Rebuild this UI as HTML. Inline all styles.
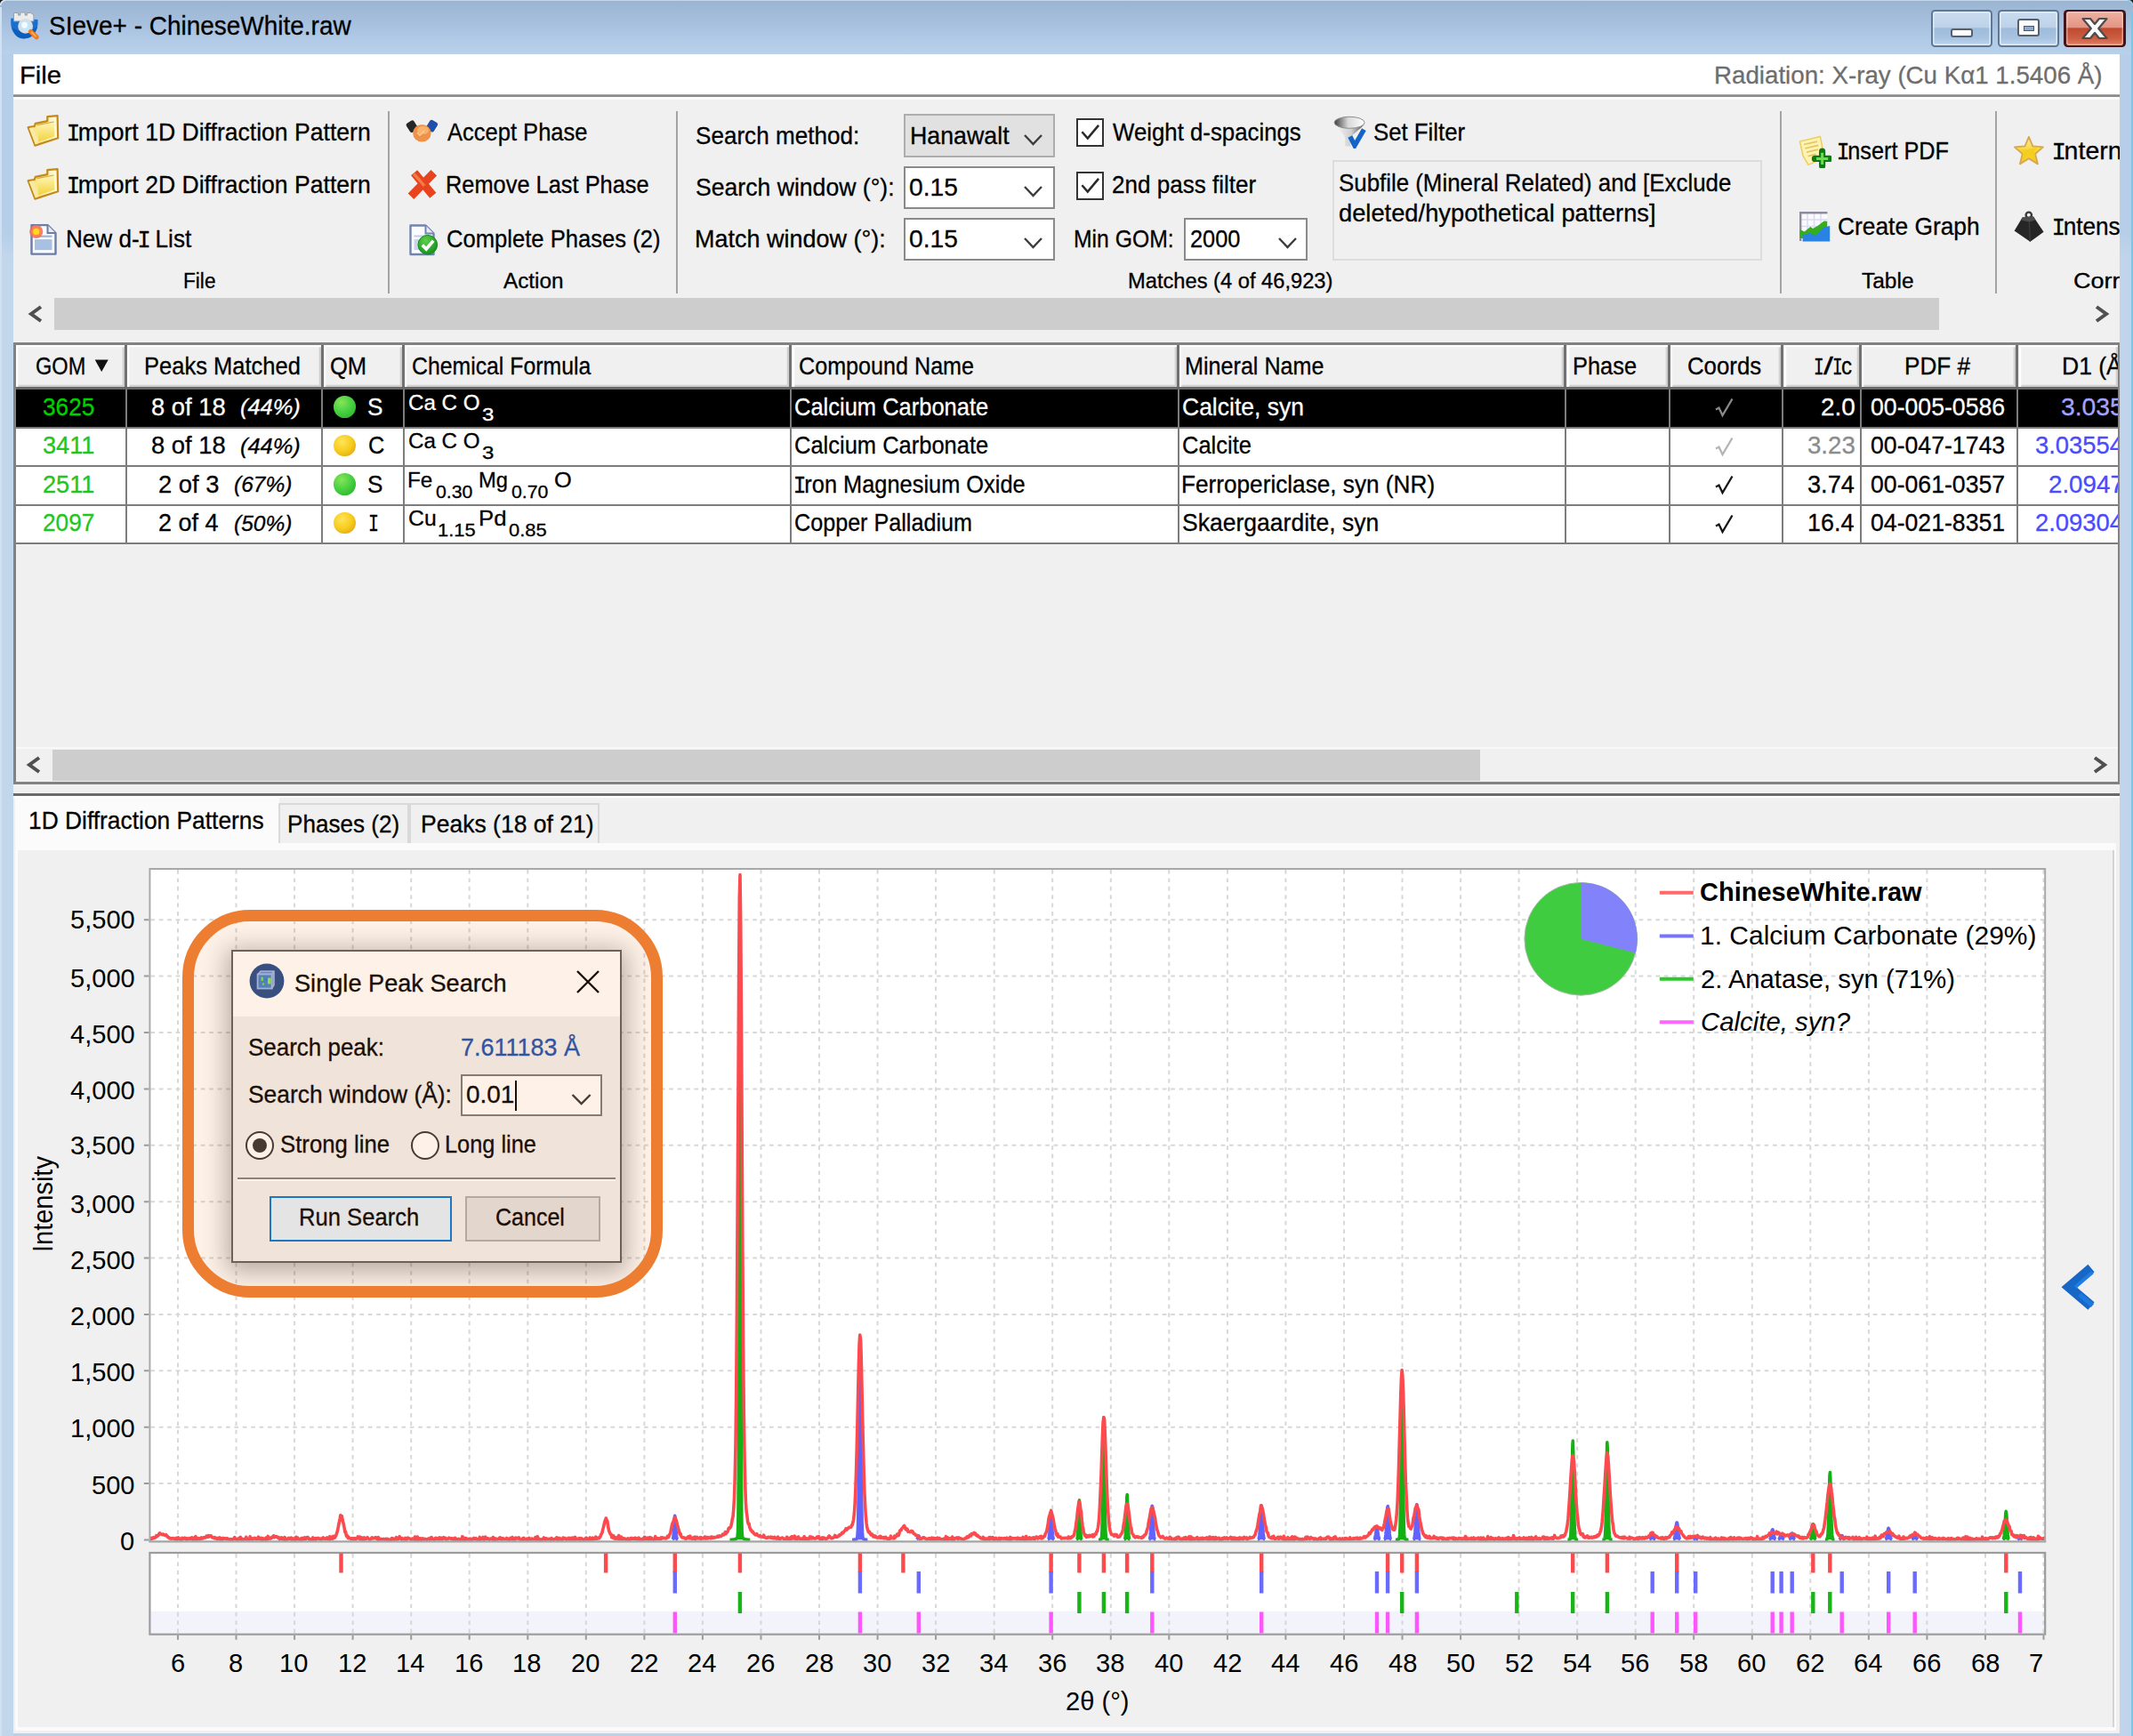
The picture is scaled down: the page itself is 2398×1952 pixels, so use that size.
<!DOCTYPE html>
<html><head><meta charset="utf-8"><title>SIeve+</title>
<style>
html,body{margin:0;padding:0;}
body{width:2398px;height:1952px;position:relative;overflow:hidden;background:#b9d1ea;font-family:"Liberation Sans",sans-serif;}
.a{position:absolute;}
.t{position:absolute;white-space:pre;transform-origin:0 0;-webkit-text-stroke:0.3px currentColor;}
</style></head><body>
<div class="a" style="left:0;top:0;width:2398px;height:1952px;background:#b9d1ea;"></div>
<div class="a" style="left:0;top:0;width:2398px;height:61px;background:linear-gradient(#99b4d2 0%,#a2bcd9 30%,#b0c9e5 70%,#b9d1ea 100%);"></div>
<div class="a" style="left:0;top:61px;width:15px;height:1891px;background:linear-gradient(#b6cee8 0,#b6cee8 200px,#c3d7ec 230px,#c3d7ec 100%);"></div>
<div class="a" style="left:2383px;top:61px;width:15px;height:1891px;background:linear-gradient(#b6cee8 0,#b6cee8 200px,#c0d5eb 230px,#c0d5eb 100%);"></div>
<div class="a" style="left:2396px;top:14px;width:2px;height:1952px;background:#7fc4e6;"></div>
<div class="a" style="left:0px;top:8px;width:1.5px;height:1952px;background:#d2e1f1;"></div>
<div class="a" style="left:6px;top:0;width:2386px;height:1.2px;background:#c4d6e9;"></div>
<svg class="a" style="left:0;top:0" width="10" height="10"><path d="M0 0H5A5 5 0 0 0 0 5Z" fill="#1a1a1a"/><path d="M0.6 6A5.4 5.4 0 0 1 6 0.6" stroke="#e6eef8" stroke-width="1.3" fill="none"/></svg>
<svg class="a" style="left:2388px;top:0" width="10" height="10"><path d="M10 0H5A5 5 0 0 1 10 5Z" fill="#1a1a1a"/><path d="M9.4 6A5.4 5.4 0 0 0 4 0.6" stroke="#8fd0ee" stroke-width="1.3" fill="none"/></svg>
<div class="a " style="left:15.0px;top:61.0px;width:2368.0px;height:1888.0px;background:#f0f0f0;"></div>
<svg class="a" style="left:11px;top:11px" width="35" height="35" viewBox="0 0 35 35">
<path d="M1.5 9.5C0 20 4 31.5 15 32.5C26 33 32.5 24 31.5 11Z" fill="#176fd2"/><path d="M3 20C5 29 10 32 16 32.3C24 32 29 27 31 19Q17 30 3 20Z" fill="#0e5cbc"/>
<path d="M4.5 3.5h5v2.6h2.4V3h5.2v3.1h2.4V3.5h4l3.4 2.2v7.2H4.5z" fill="#ececec" stroke="#9aa0a8" stroke-width="1"/>
<circle cx="17.6" cy="18.4" r="7" fill="#bfe6fb" stroke="#d9dde2" stroke-width="2.8"/><circle cx="16.6" cy="17.2" r="3.4" fill="#f2fbff"/>
<path d="M23.6 24.6l6.4 6" stroke="#f07c22" stroke-width="5.4" stroke-linecap="round"/><path d="M24.6 25.4l4.4 4.2" stroke="#fbb45a" stroke-width="1.6" stroke-linecap="round"/>
</svg>
<div class="a" style="left:2170.8px;top:10.5px;width:69.6px;height:42.5px;border-radius:4.5px;background:#5d7896;"></div>
<div class="a" style="left:2173.3px;top:13.0px;width:64.6px;height:37.5px;border-radius:3px;background:linear-gradient(#cadbee 0,#bdd2ea 46%,#9fbbdb 50%,#a9c4e2 80%,#c0d6ee 100%);box-shadow:inset 0 0 0 1.5px rgba(235,243,252,.8);"></div>
<div class="a" style="left:2193.1000000000004px;top:32.25px;width:25px;height:10px;border-radius:3px;background:#fff;border:2px solid #54606e;box-sizing:border-box;"></div>
<div class="a" style="left:2245.8px;top:10.5px;width:69.6px;height:42.5px;border-radius:4.5px;background:#5d7896;"></div>
<div class="a" style="left:2248.3px;top:13.0px;width:64.6px;height:37.5px;border-radius:3px;background:linear-gradient(#cadbee 0,#bdd2ea 46%,#9fbbdb 50%,#a9c4e2 80%,#c0d6ee 100%);box-shadow:inset 0 0 0 1.5px rgba(235,243,252,.8);"></div>
<div class="a" style="left:2268.1000000000004px;top:21.25px;width:25px;height:20px;border-radius:3px;background:#fff;border:2px solid #54606e;box-sizing:border-box;"></div>
<div class="a" style="left:2274.6000000000004px;top:28.75px;width:12px;height:6.5px;background:#8fa9cb;border:1.8px solid #4c5868;box-sizing:border-box;"></div>
<div class="a" style="left:2320.2px;top:10.5px;width:69.6px;height:42.5px;border-radius:4.5px;background:#43141a;"></div>
<div class="a" style="left:2322.7px;top:13.0px;width:64.6px;height:37.5px;border-radius:3px;background:linear-gradient(#eeb0a2 0,#e49584 46%,#bf4a2f 50%,#cd5f43 80%,#dd8468 100%);box-shadow:inset 0 0 0 1.5px rgba(255,215,200,.55);"></div>
<svg class="a" style="left:2339.0px;top:18.75px" width="32" height="26" viewBox="0 0 32 26"><path d="M2.5 2h8.5l5 6 5-6h8.5l-9.3 11 9.3 11h-8.5l-5-6-5 6h-8.5l9.3-11z" fill="#fafafa" stroke="#4c4c4c" stroke-width="2.2" stroke-linejoin="round"/></svg>
<div class="a " style="left:15.0px;top:61.0px;width:2368.0px;height:46.0px;background:#fff;"></div>
<div class="a " style="left:15.0px;top:106.4px;width:2368.0px;height:3.0px;background:#a6a6a6;"></div>
<div class="a " style="left:15.0px;top:107.1px;width:2368.0px;height:1.7px;background:#8b8b8b;"></div>
<div class="a " style="left:15.0px;top:109.4px;width:2368.0px;height:2.8px;background:#fbfbfb;"></div>
<div class="a " style="left:436.0px;top:124.5px;width:2.0px;height:205.0px;background:#a3a3a3;"></div>
<div class="a " style="left:760.4px;top:124.5px;width:2.0px;height:205.0px;background:#a3a3a3;"></div>
<div class="a " style="left:2001.3px;top:124.5px;width:2.0px;height:205.0px;background:#a3a3a3;"></div>
<div class="a " style="left:2243.0px;top:124.5px;width:2.0px;height:205.0px;background:#a3a3a3;"></div>
<div class="a" style="left:1016px;top:128px;width:169.6px;height:48.5px;background:#e1e1e1;border:2px solid #adadad;box-sizing:border-box;"></div>
<svg class="a" style="left:1150.0px;top:149.5px" width="23" height="14"><path d="M2 2L11.5 12L21 2" fill="none" stroke="#3c3c3c" stroke-width="2.4"/></svg>
<div class="a" style="left:1016px;top:186.6px;width:169.6px;height:48px;background:#fff;border:2px solid #8a8a8a;box-sizing:border-box;"></div>
<svg class="a" style="left:1150.0px;top:207.5px" width="23" height="14"><path d="M2 2L11.5 12L21 2" fill="none" stroke="#3c3c3c" stroke-width="2.4"/></svg>
<div class="a" style="left:1016px;top:245px;width:169.6px;height:48px;background:#fff;border:2px solid #8a8a8a;box-sizing:border-box;"></div>
<svg class="a" style="left:1150.0px;top:266.0px" width="23" height="14"><path d="M2 2L11.5 12L21 2" fill="none" stroke="#3c3c3c" stroke-width="2.4"/></svg>
<div class="a" style="left:1331px;top:245px;width:139px;height:48px;background:#fff;border:2px solid #8a8a8a;box-sizing:border-box;"></div>
<svg class="a" style="left:1435.5px;top:266.0px" width="23" height="14"><path d="M2 2L11.5 12L21 2" fill="none" stroke="#3c3c3c" stroke-width="2.4"/></svg>
<div class="a" style="left:1209.6px;top:133.2px;width:31.5px;height:31.5px;background:#fff;border:2.2px solid #333;box-sizing:border-box;"></div>
<svg class="a" style="left:1209.6px;top:133.2px" width="31.5" height="31.5" viewBox="0 0 32 32"><path d="M6.5 15.5L13 23L25.5 8" fill="none" stroke="#2a2a2a" stroke-width="2.6"/></svg>
<div class="a" style="left:1209.6px;top:193.4px;width:31.5px;height:31.5px;background:#fff;border:2.2px solid #333;box-sizing:border-box;"></div>
<svg class="a" style="left:1209.6px;top:193.4px" width="31.5" height="31.5" viewBox="0 0 32 32"><path d="M6.5 15.5L13 23L25.5 8" fill="none" stroke="#2a2a2a" stroke-width="2.6"/></svg>
<div class="a" style="left:1498.3px;top:180px;width:482.4px;height:112.7px;border:2px solid #dcdcdc;box-sizing:border-box;"></div>
<svg width="0" height="0" style="position:absolute"><defs><linearGradient id="gf1" x1="0" y1="0" x2="0" y2="1"><stop offset="0" stop-color="#fff6b8"/><stop offset="1" stop-color="#f3d23c"/></linearGradient><linearGradient id="gf2" x1="0" y1="0" x2="1" y2="0"><stop offset="0" stop-color="#f7df6a"/><stop offset="1" stop-color="#fffbe2"/></linearGradient><linearGradient id="gfun" x1="0" y1="0" x2="1" y2="0"><stop offset="0" stop-color="#3c3c3c"/><stop offset=".45" stop-color="#d8d8d8"/><stop offset="1" stop-color="#ffffff"/></linearGradient><linearGradient id="gcone" x1="0" y1="0" x2="1" y2="0"><stop offset="0" stop-color="#f4f4f4"/><stop offset=".55" stop-color="#d0d0d0"/><stop offset="1" stop-color="#4a4a4a"/></linearGradient><radialGradient id="ggc" cx=".4" cy=".3" r=".8"><stop offset="0" stop-color="#5fd04a"/><stop offset="1" stop-color="#0f8a1a"/></radialGradient><linearGradient id="gstar" x1="0" y1="0" x2="0" y2="1"><stop offset="0" stop-color="#fbeea0"/><stop offset=".5" stop-color="#f7d838"/><stop offset="1" stop-color="#f3c618"/></linearGradient></defs></svg>
<svg class="a" style="left:30.4px;top:129.4px" width="37" height="37" viewBox="-1 -1 37 37">
<path d="M22.3 1.2L33.6 0.2L34.2 25.2L8.4 33.6L0.6 13.2L7.6 12.2L8.8 8.8L22.3 6.2Z" fill="url(#gf2)" stroke="#c48a18" stroke-width="2.2" stroke-linejoin="round"/>
<path d="M1.6 14L7 13.2L11.6 31.6L8.8 32.6Z" fill="#f7e9a8"/>
<path d="M10.6 10.6L29.6 7L30.4 23.6L12.4 29.6Z" fill="url(#gf1)"/>
<path d="M10.6 10.6L29.6 7" stroke="#d8a838" stroke-width="1.2" fill="none"/></svg>
<svg class="a" style="left:30.4px;top:189.4px" width="37" height="37" viewBox="-1 -1 37 37">
<path d="M22.3 1.2L33.6 0.2L34.2 25.2L8.4 33.6L0.6 13.2L7.6 12.2L8.8 8.8L22.3 6.2Z" fill="url(#gf2)" stroke="#c48a18" stroke-width="2.2" stroke-linejoin="round"/>
<path d="M1.6 14L7 13.2L11.6 31.6L8.8 32.6Z" fill="#f7e9a8"/>
<path d="M10.6 10.6L29.6 7L30.4 23.6L12.4 29.6Z" fill="url(#gf1)"/>
<path d="M10.6 10.6L29.6 7" stroke="#d8a838" stroke-width="1.2" fill="none"/></svg>
<svg class="a" style="left:30px;top:249px" width="38" height="40" viewBox="-4 -2.6 38 40">
<path d="M1.5 1.5h18l9 9v23.5h-27z" fill="#fbfcff" stroke="#6b7ca8" stroke-width="2.4" stroke-linejoin="round"/>
<path d="M19.5 1.5v9h9" fill="#e6ebf5" stroke="#6b7ca8" stroke-width="2"/>
<rect x="5" y="17.5" width="19.5" height="12" fill="#a8c0e2"/><rect x="5" y="13" width="19.5" height="2.2" fill="#9db4dc"/>
<circle cx="6.7" cy="8.8" r="7.6" fill="#f26a5e" opacity=".85"/><circle cx="6.7" cy="8.8" r="5.6" fill="#f88a3a"/><circle cx="6.7" cy="8.8" r="3.6" fill="#ffd622"/></svg>
<svg class="a" style="left:456px;top:134px" width="38" height="28" viewBox="0 0 38 28">
<rect x="-5" y="-6" width="10" height="12" rx="2.5" transform="translate(7.2 8.2) rotate(-32)" fill="#262626"/>
<rect x="-5" y="-6" width="10" height="12" rx="2.5" transform="translate(29.6 7.6) rotate(32)" fill="#1f4fa8"/>
<ellipse cx="18.4" cy="15.8" rx="10.2" ry="9.8" fill="#f0914a"/><ellipse cx="19.5" cy="12.5" rx="6.5" ry="4.6" fill="#f8b670" opacity=".9"/>
<path d="M13 15l3 3 5-5" stroke="#f9cf8a" stroke-width="1.6" fill="none"/></svg>
<svg class="a" style="left:456px;top:190px" width="37" height="37" viewBox="0 0 37 37">
<path d="M9.6 4.2L30.8 29.8" stroke="#e8431e" stroke-width="9.2" fill="none"/>
<path d="M31.8 4.2L6 30.8" stroke="#e8431e" stroke-width="9.2" fill="none"/>
<path d="M9 5.4C13 9 17 14 21 19" stroke="#f38a50" stroke-width="3.4" fill="none" opacity=".8"/></svg>
<svg class="a" style="left:458px;top:250px" width="38" height="40" viewBox="-2 -2 38 40">
<path d="M1.5 1.5h17l9 9v23.5h-26z" fill="#fbfcff" stroke="#7283ad" stroke-width="2.4" stroke-linejoin="round"/>
<path d="M18.5 1.5v9h9" fill="#e6ebf5" stroke="#7283ad" stroke-width="2"/>
<rect x="5.5" y="17" width="6" height="12" fill="#c9d4ea"/><rect x="5.5" y="12.5" width="12" height="2" fill="#c0cce6"/>
<circle cx="20.8" cy="23.2" r="10.8" fill="url(#ggc)" stroke="#128a1c" stroke-width="1"/><path d="M14.8 23.4l4.4 4.6 8-9.4" stroke="#fff" stroke-width="3.6" fill="none"/></svg>
<svg class="a" style="left:1499px;top:130px" width="38" height="37" viewBox="-1 -1 38 37">
<path d="M1.2 8.6C6 16 11.5 20.5 12.2 24.5V33.4H18.4V24.5C20 20 30 14 34 8.6Z" fill="url(#gcone)"/>
<ellipse cx="17.1" cy="6.8" rx="17" ry="6.5" fill="url(#gfun)" stroke="#8e8e8e" stroke-width="1"/>
<path d="M17.8 22.4L23 32.6L33.4 14.6" stroke="#1565c8" stroke-width="5.4" fill="none" stroke-linejoin="miter"/></svg>
<svg class="a" style="left:2021.5px;top:152px" width="37" height="37" viewBox="-1 -1 37 37">
<path d="M0.5 6L23.4 0.6L28 24L10 32.4L4 22Z" fill="#fdf4b4" stroke="#ecd060" stroke-width="1.6" stroke-linejoin="round"/>
<path d="M5 9.5l15-3.4M6.4 13.8l15-3.4M8 18.2l13-3M9.6 22.6l9-2.2" stroke="#e4c662" stroke-width="1.7"/>
<path d="M25.6 17.2v16.4M17.4 25.4h16.4" stroke="#0b7d10" stroke-width="7.2" stroke-linecap="round"/><path d="M25.6 18.8v13.2M19 25.4h13.2" stroke="#6fdc4c" stroke-width="3"/></svg>
<svg class="a" style="left:2021.5px;top:236.7px" width="37" height="37" viewBox="-1 -1 37 37">
<rect x="1.4" y="1.4" width="29.6" height="31" fill="#fafaff"/>
<path d="M1.4 9h30M1.4 16.5h30M9 1.4v31M16.5 1.4v31M24 1.4v31" stroke="#dcdcf0" stroke-width="1.6"/>
<path d="M1.2 33V1.2H31.4" stroke="#8c8c9c" stroke-width="2.4" fill="none"/>
<path d="M0.6 20l5 2.6 6.6-5.6 3 2 6-3.6 6.4-5 3.6 0.4V30H0.6z" fill="#34ae1e"/>
<path d="M3.6 26.4l8-2.4 7 3 8.6-9.4 7-1.6V33.6H3.6z" fill="#2a82e2"/></svg>
<svg class="a" style="left:2263.3px;top:151.5px" width="37" height="37" viewBox="-1 -1 37 37">
<path d="M16.9 0.8l4.4 10.6 11.6 1-8.8 7.6 2.8 11.4-10-6.2-10 6.2 2.8-11.4-8.8-7.6 11.6-1z" fill="url(#gstar)" stroke="#d6a652" stroke-width="1.8" stroke-linejoin="round"/>
<path d="M6 15.5C14 15.5 22 14 28 11.5l-5 6 1.6 8-7.7-4.6-7.7 4.6 1.6-8z" fill="#f5cc1c" opacity=".85"/></svg>
<svg class="a" style="left:2263.3px;top:236.7px" width="37" height="37" viewBox="-1 -1 37 37">
<circle cx="16.8" cy="3.8" r="3.2" fill="none" stroke="#3a3a3a" stroke-width="2.4"/>
<path d="M9.6 6.4L22 5.6L33.6 22.8L18.4 33.8L0.6 21.6Z" fill="#262626"/>
<path d="M9.6 6.4L22 5.6L24.6 9.4L17.4 11.4L8.2 9.6Z" fill="#4c4c4c"/><path d="M17.4 11.4L18.4 33.8" stroke="#3e3e3e" stroke-width="1.2"/></svg>
<div class="a " style="left:60.5px;top:335.0px;width:2119.0px;height:35.5px;background:#cdcdcd;"></div>
<svg class="a" style="left:29px;top:341.75px" width="22" height="22"><path d="M17 3L6 11L17 19" fill="none" stroke="#505050" stroke-width="4"/></svg>
<svg class="a" style="left:2352px;top:341.75px" width="22" height="22"><path d="M5 3L16 11L5 19" fill="none" stroke="#505050" stroke-width="4"/></svg>
<div class="a " style="left:15.0px;top:385.0px;width:2368.0px;height:497.0px;background:#828282;"></div>
<div class="a " style="left:17.6px;top:387.6px;width:2363.5px;height:491.5px;background:#f0f0f0;"></div>
<div class="a" style="left:17.6px;top:387.6px;width:122.6px;height:47.599999999999966px;background:#f0f0f0;box-shadow:inset 2.3px 2.3px 0 #fff, inset -2.3px -2.3px 0 #cfcfcf;"></div>
<div class="a" style="left:143.3px;top:387.6px;width:217.3px;height:47.599999999999966px;background:#f0f0f0;box-shadow:inset 2.3px 2.3px 0 #fff, inset -2.3px -2.3px 0 #cfcfcf;"></div>
<div class="a " style="left:140.2px;top:387.6px;width:3.1px;height:47.6px;background:#717171;"></div>
<div class="a" style="left:363.7px;top:387.6px;width:88.5px;height:47.599999999999966px;background:#f0f0f0;box-shadow:inset 2.3px 2.3px 0 #fff, inset -2.3px -2.3px 0 #cfcfcf;"></div>
<div class="a " style="left:360.6px;top:387.6px;width:3.1px;height:47.6px;background:#717171;"></div>
<div class="a" style="left:455.3px;top:387.6px;width:432.1px;height:47.599999999999966px;background:#f0f0f0;box-shadow:inset 2.3px 2.3px 0 #fff, inset -2.3px -2.3px 0 #cfcfcf;"></div>
<div class="a " style="left:452.2px;top:387.6px;width:3.1px;height:47.6px;background:#717171;"></div>
<div class="a" style="left:890.5px;top:387.6px;width:432.6px;height:47.599999999999966px;background:#f0f0f0;box-shadow:inset 2.3px 2.3px 0 #fff, inset -2.3px -2.3px 0 #cfcfcf;"></div>
<div class="a " style="left:887.4px;top:387.6px;width:3.1px;height:47.6px;background:#717171;"></div>
<div class="a" style="left:1326.2px;top:387.6px;width:432.2px;height:47.599999999999966px;background:#f0f0f0;box-shadow:inset 2.3px 2.3px 0 #fff, inset -2.3px -2.3px 0 #cfcfcf;"></div>
<div class="a " style="left:1323.1px;top:387.6px;width:3.1px;height:47.6px;background:#717171;"></div>
<div class="a" style="left:1761.5px;top:387.6px;width:113.6px;height:47.599999999999966px;background:#f0f0f0;box-shadow:inset 2.3px 2.3px 0 #fff, inset -2.3px -2.3px 0 #cfcfcf;"></div>
<div class="a " style="left:1758.4px;top:387.6px;width:3.1px;height:47.6px;background:#717171;"></div>
<div class="a" style="left:1878.2px;top:387.6px;width:124.2px;height:47.599999999999966px;background:#f0f0f0;box-shadow:inset 2.3px 2.3px 0 #fff, inset -2.3px -2.3px 0 #cfcfcf;"></div>
<div class="a " style="left:1875.1px;top:387.6px;width:3.1px;height:47.6px;background:#717171;"></div>
<div class="a" style="left:2005.5px;top:387.6px;width:84.6px;height:47.599999999999966px;background:#f0f0f0;box-shadow:inset 2.3px 2.3px 0 #fff, inset -2.3px -2.3px 0 #cfcfcf;"></div>
<div class="a " style="left:2002.4px;top:387.6px;width:3.1px;height:47.6px;background:#717171;"></div>
<div class="a" style="left:2093.2px;top:387.6px;width:173.2px;height:47.599999999999966px;background:#f0f0f0;box-shadow:inset 2.3px 2.3px 0 #fff, inset -2.3px -2.3px 0 #cfcfcf;"></div>
<div class="a " style="left:2090.1px;top:387.6px;width:3.1px;height:47.6px;background:#717171;"></div>
<div class="a" style="left:2269.5px;top:387.6px;width:111.7px;height:47.599999999999966px;background:#f0f0f0;box-shadow:inset 2.3px 2.3px 0 #fff, inset -2.3px -2.3px 0 #cfcfcf;"></div>
<div class="a " style="left:2266.4px;top:387.6px;width:3.1px;height:47.6px;background:#717171;"></div>
<div class="a " style="left:17.6px;top:435.2px;width:2363.5px;height:2.8px;background:#6a6a6a;"></div>
<svg class="a" style="left:105.8px;top:403.6px" width="17" height="15"><path d="M0.7 0.5h15l-7.5 13.6z" fill="#111"/></svg>
<div class="a " style="left:17.6px;top:438.0px;width:2363.5px;height:41.5px;background:#000;"></div>
<div class="a " style="left:17.6px;top:479.5px;width:2363.5px;height:2.0px;background:#7c7c7c;"></div>
<div class="a" style="left:375.0px;top:445.3px;width:24.6px;height:24.6px;border-radius:50%;background:radial-gradient(circle at 36% 30%,#86e458 0,#44cf40 50%,#2fb42f 85%,#27a027 100%);"></div>
<svg class="a" style="left:1926px;top:446.0px" width="26" height="26"><path d="M3 14.5L6.5 12.5L10.5 21L21.5 2.5" fill="none" stroke="#8a8a8a" stroke-width="2.3"/></svg>
<div class="a " style="left:17.6px;top:481.5px;width:2363.5px;height:41.5px;background:#fff;"></div>
<div class="a " style="left:17.6px;top:523.0px;width:2363.5px;height:2.0px;background:#7c7c7c;"></div>
<div class="a" style="left:375.0px;top:488.8px;width:24.6px;height:24.6px;border-radius:50%;background:radial-gradient(circle at 38% 32%,#ffe45a 0,#f6cc1c 50%,#e2a616 85%,#c88a12 100%);"></div>
<svg class="a" style="left:1926px;top:489.5px" width="26" height="26"><path d="M3 14.5L6.5 12.5L10.5 21L21.5 2.5" fill="none" stroke="#b4b4b4" stroke-width="2.3"/></svg>
<div class="a " style="left:17.6px;top:525.0px;width:2363.5px;height:41.5px;background:#fff;"></div>
<div class="a " style="left:17.6px;top:566.5px;width:2363.5px;height:2.0px;background:#7c7c7c;"></div>
<div class="a" style="left:375.0px;top:532.3000000000001px;width:24.6px;height:24.6px;border-radius:50%;background:radial-gradient(circle at 36% 30%,#86e458 0,#44cf40 50%,#2fb42f 85%,#27a027 100%);"></div>
<svg class="a" style="left:1926px;top:533.0px" width="26" height="26"><path d="M3 14.5L6.5 12.5L10.5 21L21.5 2.5" fill="none" stroke="#151515" stroke-width="2.3"/></svg>
<div class="a " style="left:17.6px;top:568.5px;width:2363.5px;height:41.5px;background:#fff;"></div>
<div class="a " style="left:17.6px;top:610.0px;width:2363.5px;height:2.0px;background:#7c7c7c;"></div>
<div class="a" style="left:375.0px;top:575.8000000000001px;width:24.6px;height:24.6px;border-radius:50%;background:radial-gradient(circle at 38% 32%,#ffe45a 0,#f6cc1c 50%,#e2a616 85%,#c88a12 100%);"></div>
<svg class="a" style="left:1926px;top:576.5px" width="26" height="26"><path d="M3 14.5L6.5 12.5L10.5 21L21.5 2.5" fill="none" stroke="#151515" stroke-width="2.3"/></svg>
<div class="a " style="left:140.7px;top:438.0px;width:2.2px;height:174.0px;background:#7c7c7c;"></div>
<div class="a " style="left:361.1px;top:438.0px;width:2.2px;height:174.0px;background:#7c7c7c;"></div>
<div class="a " style="left:452.7px;top:438.0px;width:2.2px;height:174.0px;background:#7c7c7c;"></div>
<div class="a " style="left:887.9px;top:438.0px;width:2.2px;height:174.0px;background:#7c7c7c;"></div>
<div class="a " style="left:1323.6px;top:438.0px;width:2.2px;height:174.0px;background:#7c7c7c;"></div>
<div class="a " style="left:1758.9px;top:438.0px;width:2.2px;height:174.0px;background:#7c7c7c;"></div>
<div class="a " style="left:1875.6px;top:438.0px;width:2.2px;height:174.0px;background:#7c7c7c;"></div>
<div class="a " style="left:2002.9px;top:438.0px;width:2.2px;height:174.0px;background:#7c7c7c;"></div>
<div class="a " style="left:2090.6px;top:438.0px;width:2.2px;height:174.0px;background:#7c7c7c;"></div>
<div class="a " style="left:2266.9px;top:438.0px;width:2.2px;height:174.0px;background:#7c7c7c;"></div>
<div class="a " style="left:17.6px;top:840.0px;width:2363.5px;height:2.0px;background:#f8f8f8;"></div>
<div class="a " style="left:59.0px;top:843.0px;width:1605.2px;height:34.6px;background:#cdcdcd;"></div>
<svg class="a" style="left:26.5px;top:849.3px" width="22" height="22"><path d="M17 3L6 11L17 19" fill="none" stroke="#505050" stroke-width="4"/></svg>
<svg class="a" style="left:2350px;top:849.3px" width="22" height="22"><path d="M5 3L16 11L5 19" fill="none" stroke="#505050" stroke-width="4"/></svg>
<div class="a " style="left:15.0px;top:892.4px;width:2368.0px;height:2.4px;background:#6a6a6a;"></div>
<div class="a " style="left:15.0px;top:894.8px;width:2368.0px;height:2.4px;background:#fdfdfd;"></div>
<div class="a " style="left:16.5px;top:947.5px;width:2362.0px;height:998.6px;background:#fbfbfb;"></div>
<div class="a " style="left:16.5px;top:897.0px;width:297.0px;height:52.0px;background:#fbfbfb;"></div>
<div class="a" style="left:313.4px;top:902.9px;width:146.5px;height:45px;background:#f0f0f0;border:2px solid #d9d9d9;border-bottom:none;box-sizing:border-box;"></div>
<div class="a" style="left:459.9px;top:902.9px;width:214.5px;height:45px;background:#f0f0f0;border:2px solid #d9d9d9;border-bottom:none;box-sizing:border-box;"></div>
<div class="a " style="left:20.0px;top:956.0px;width:2355.0px;height:986.0px;background:#f0f0f0;"></div>
<div class="a " style="left:2375.0px;top:956.0px;width:1.6px;height:986.0px;background:#d4d4d4;"></div>
<svg class="a" style="left:0;top:0" width="2398" height="1952" viewBox="0 0 2398 1952">
<rect x="167.4" y="976" width="2132.7999999999997" height="757.2" fill="#fff"/>
<rect x="167.4" y="1745" width="2132.7999999999997" height="93.70000000000005" fill="#fff"/>
<rect x="169.4" y="1811.7" width="2129.7999999999997" height="25" fill="#f3f3fb"/>
<path d="M200.0 978V1732.2M200.0 1747V1837.7M265.5 978V1732.2M265.5 1747V1837.7M331.1 978V1732.2M331.1 1747V1837.7M396.6 978V1732.2M396.6 1747V1837.7M462.2 978V1732.2M462.2 1747V1837.7M527.7 978V1732.2M527.7 1747V1837.7M593.3 978V1732.2M593.3 1747V1837.7M658.8 978V1732.2M658.8 1747V1837.7M724.4 978V1732.2M724.4 1747V1837.7M789.9 978V1732.2M789.9 1747V1837.7M855.5 978V1732.2M855.5 1747V1837.7M921.0 978V1732.2M921.0 1747V1837.7M986.6 978V1732.2M986.6 1747V1837.7M1052.1 978V1732.2M1052.1 1747V1837.7M1117.7 978V1732.2M1117.7 1747V1837.7M1183.2 978V1732.2M1183.2 1747V1837.7M1248.8 978V1732.2M1248.8 1747V1837.7M1314.3 978V1732.2M1314.3 1747V1837.7M1379.9 978V1732.2M1379.9 1747V1837.7M1445.4 978V1732.2M1445.4 1747V1837.7M1511.0 978V1732.2M1511.0 1747V1837.7M1576.5 978V1732.2M1576.5 1747V1837.7M1642.1 978V1732.2M1642.1 1747V1837.7M1707.6 978V1732.2M1707.6 1747V1837.7M1773.2 978V1732.2M1773.2 1747V1837.7M1838.7 978V1732.2M1838.7 1747V1837.7M1904.2 978V1732.2M1904.2 1747V1837.7M1969.8 978V1732.2M1969.8 1747V1837.7M2035.3 978V1732.2M2035.3 1747V1837.7M2100.9 978V1732.2M2100.9 1747V1837.7M2166.4 978V1732.2M2166.4 1747V1837.7M2232.0 978V1732.2M2232.0 1747V1837.7M2297.5 978V1732.2M2297.5 1747V1837.7M169.4 1668.1H2299.2M169.4 1604.7H2299.2M169.4 1541.3H2299.2M169.4 1477.9H2299.2M169.4 1414.5H2299.2M169.4 1351.2H2299.2M169.4 1287.8H2299.2M169.4 1224.4H2299.2M169.4 1161.0H2299.2M169.4 1097.6H2299.2M169.4 1034.2H2299.2" stroke="#d8d8d8" stroke-width="2" stroke-dasharray="4.7 4.7" fill="none"/>
<path d="M161.9 1731.5H167.4M161.9 1668.1H167.4M161.9 1604.7H167.4M161.9 1541.3H167.4M161.9 1477.9H167.4M161.9 1414.5H167.4M161.9 1351.2H167.4M161.9 1287.8H167.4M161.9 1224.4H167.4M161.9 1161.0H167.4M161.9 1097.6H167.4M161.9 1034.2H167.4M200.0 1838.7V1843.7M265.5 1838.7V1843.7M331.1 1838.7V1843.7M396.6 1838.7V1843.7M462.2 1838.7V1843.7M527.7 1838.7V1843.7M593.3 1838.7V1843.7M658.8 1838.7V1843.7M724.4 1838.7V1843.7M789.9 1838.7V1843.7M855.5 1838.7V1843.7M921.0 1838.7V1843.7M986.6 1838.7V1843.7M1052.1 1838.7V1843.7M1117.7 1838.7V1843.7M1183.2 1838.7V1843.7M1248.8 1838.7V1843.7M1314.3 1838.7V1843.7M1379.9 1838.7V1843.7M1445.4 1838.7V1843.7M1511.0 1838.7V1843.7M1576.5 1838.7V1843.7M1642.1 1838.7V1843.7M1707.6 1838.7V1843.7M1773.2 1838.7V1843.7M1838.7 1838.7V1843.7M1904.2 1838.7V1843.7M1969.8 1838.7V1843.7M2035.3 1838.7V1843.7M2100.9 1838.7V1843.7M2166.4 1838.7V1843.7M2232.0 1838.7V1843.7M2297.5 1838.7V1843.7" stroke="#9a9a9a" stroke-width="2" fill="none"/>
<clipPath id="pc"><rect x="168.4" y="977" width="2130.7999999999997" height="757.2"/></clipPath>
<g clip-path="url(#pc)" fill="none" stroke-linejoin="round">
<path d="M756.0 1731.2L756.4 1730.7L756.8 1729.5L757.2 1726.6L757.6 1721.5L757.9 1714.5L758.3 1707.8L758.7 1704.3L759.1 1706.1L759.5 1712.1L759.9 1719.3L760.3 1725.2L760.7 1728.7L761.1 1730.4L761.5 1731.1L761.9 1731.3M958.1 1731.3L958.5 1731.3L958.9 1731.3L959.3 1731.2L959.7 1731.2L960.1 1731.2L960.5 1731.1L960.9 1731.1L961.3 1731.0L961.7 1731.0L962.1 1730.9L962.5 1730.8L962.8 1730.6L963.2 1730.2L963.6 1729.3L964.0 1726.6L964.4 1720.1L964.8 1705.7L965.2 1679.2L965.6 1638.6L966.0 1588.5L966.4 1541.7L966.8 1515.3L967.2 1520.9L967.6 1555.9L968.0 1605.6L968.4 1653.6L968.7 1689.6L969.1 1711.6L969.5 1722.9L969.9 1727.8L970.3 1729.7L970.7 1730.4L971.1 1730.7L971.5 1730.8L971.9 1730.9L972.3 1731.0L972.7 1731.1L973.1 1731.1L973.5 1731.2L973.9 1731.2L974.3 1731.2L974.6 1731.3L975.0 1731.3L975.4 1731.3M1030.5 1731.1L1030.9 1730.7L1031.3 1730.1L1031.7 1729.1L1032.1 1728.1L1032.5 1727.3L1032.9 1727.1L1033.2 1727.5L1033.6 1728.4L1034.0 1729.4L1034.4 1730.3L1034.8 1730.9L1035.2 1731.2M1178.0 1731.3L1178.4 1731.1L1178.8 1730.7L1179.2 1729.6L1179.5 1727.3L1179.9 1723.2L1180.3 1717.1L1180.7 1709.9L1181.1 1703.6L1181.5 1700.5L1181.9 1702.1L1182.3 1707.6L1182.7 1714.8L1183.1 1721.4L1183.5 1726.2L1183.9 1729.0L1184.3 1730.4L1184.7 1731.0L1185.1 1731.3M1291.6 1731.3L1292.0 1731.1L1292.4 1730.6L1292.8 1729.5L1293.2 1726.9L1293.6 1722.2L1294.0 1715.0L1294.4 1706.1L1294.8 1697.9L1295.2 1693.2L1295.6 1694.2L1296.0 1700.4L1296.4 1709.2L1296.7 1717.7L1297.1 1724.1L1297.5 1728.0L1297.9 1730.0L1298.3 1730.8L1298.7 1731.2L1299.1 1731.3M1413.9 1731.3L1414.3 1731.2L1414.7 1730.9L1415.1 1730.3L1415.5 1729.0L1415.9 1726.4L1416.3 1722.0L1416.7 1715.6L1417.1 1707.8L1417.5 1700.1L1417.9 1694.5L1418.3 1692.9L1418.7 1696.0L1419.1 1702.5L1419.5 1710.5L1419.8 1718.0L1420.2 1723.7L1420.6 1727.4L1421.0 1729.5L1421.4 1730.6L1421.8 1731.0L1422.2 1731.2M1544.5 1731.3L1544.9 1731.1L1545.3 1730.6L1545.7 1729.7L1546.1 1728.2L1546.5 1726.0L1546.9 1723.3L1547.3 1720.7L1547.7 1718.7L1548.1 1718.2L1548.5 1719.2L1548.8 1721.5L1549.2 1724.2L1549.6 1726.8L1550.0 1728.8L1550.4 1730.1L1550.8 1730.8L1551.2 1731.1L1551.6 1731.3M1555.9 1731.3L1556.3 1731.2L1556.7 1730.9L1557.1 1730.2L1557.5 1728.7L1557.9 1725.9L1558.3 1721.2L1558.7 1714.7L1559.1 1706.9L1559.5 1699.4L1559.9 1694.5L1560.3 1693.7L1560.6 1697.4L1561.0 1704.3L1561.4 1712.2L1561.8 1719.2L1562.2 1724.5L1562.6 1727.9L1563.0 1729.8L1563.4 1730.7L1563.8 1731.1L1564.2 1731.3M1588.6 1731.3L1589.0 1731.2L1589.4 1731.0L1589.7 1730.4L1590.1 1729.2L1590.5 1726.8L1590.9 1722.7L1591.3 1716.5L1591.7 1708.7L1592.1 1700.6L1592.5 1694.3L1592.9 1691.9L1593.3 1694.3L1593.7 1700.6L1594.1 1708.7L1594.5 1716.5L1594.9 1722.7L1595.3 1726.8L1595.6 1729.2L1596.0 1730.4L1596.4 1731.0L1596.8 1731.2L1597.2 1731.3M1854.4 1731.2L1854.8 1730.9L1855.2 1730.4L1855.6 1729.5L1856.0 1728.4L1856.4 1727.0L1856.8 1725.5L1857.2 1724.3L1857.6 1723.7L1858.0 1723.8L1858.4 1724.7L1858.8 1726.0L1859.2 1727.4L1859.5 1728.8L1859.9 1729.8L1860.3 1730.6L1860.7 1731.0L1861.1 1731.3M1881.2 1731.3L1881.6 1731.1L1882.0 1730.7L1882.4 1730.0L1882.7 1728.7L1883.1 1726.6L1883.5 1723.7L1883.9 1720.2L1884.3 1716.5L1884.7 1713.5L1885.1 1712.0L1885.5 1712.3L1885.9 1714.4L1886.3 1717.7L1886.7 1721.4L1887.1 1724.7L1887.5 1727.4L1887.9 1729.2L1888.3 1730.3L1888.6 1730.9L1889.0 1731.2M1903.6 1731.2L1904.0 1730.9L1904.4 1730.5L1904.8 1730.1L1905.2 1729.5L1905.6 1729.1L1906.0 1728.8L1906.3 1728.7L1906.7 1728.9L1907.1 1729.4L1907.5 1729.9L1907.9 1730.4L1908.3 1730.8L1908.7 1731.1L1909.1 1731.3M1988.9 1731.3L1989.3 1731.1L1989.7 1730.8L1990.1 1730.1L1990.5 1729.0L1990.9 1727.5L1991.3 1725.5L1991.7 1723.3L1992.1 1721.3L1992.5 1720.1L1992.9 1719.9L1993.3 1720.8L1993.7 1722.6L1994.0 1724.8L1994.4 1726.8L1994.8 1728.6L1995.2 1729.8L1995.6 1730.6L1996.0 1731.0L1996.4 1731.2M1999.2 1731.3L1999.6 1731.1L1999.9 1730.7L2000.3 1730.1L2000.7 1729.2L2001.1 1728.1L2001.5 1726.8L2001.9 1725.7L2002.3 1725.0L2002.7 1724.9L2003.1 1725.5L2003.5 1726.5L2003.9 1727.7L2004.3 1728.9L2004.7 1729.8L2005.1 1730.5L2005.5 1731.0L2005.8 1731.2M2011.4 1731.2L2011.7 1731.0L2012.1 1730.5L2012.5 1729.7L2012.9 1728.7L2013.3 1727.3L2013.7 1725.9L2014.1 1724.7L2014.5 1724.0L2014.9 1724.0L2015.3 1724.7L2015.7 1725.9L2016.1 1727.3L2016.5 1728.7L2016.9 1729.7L2017.3 1730.5L2017.6 1731.0L2018.0 1731.2M2067.6 1731.3L2068.0 1731.0L2068.4 1730.7L2068.8 1730.1L2069.2 1729.3L2069.6 1728.4L2070.0 1727.6L2070.3 1726.9L2070.7 1726.7L2071.1 1726.9L2071.5 1727.6L2071.9 1728.4L2072.3 1729.3L2072.7 1730.1L2073.1 1730.7L2073.5 1731.0L2073.9 1731.3M2119.5 1731.2L2119.9 1731.0L2120.3 1730.5L2120.7 1729.6L2121.1 1728.2L2121.5 1726.2L2121.9 1723.8L2122.3 1721.3L2122.7 1719.3L2123.0 1718.3L2123.4 1718.5L2123.8 1719.9L2124.2 1722.1L2124.6 1724.6L2125.0 1726.9L2125.4 1728.7L2125.8 1729.9L2126.2 1730.7L2126.6 1731.1L2127.0 1731.3M2149.4 1731.2L2149.8 1730.9L2150.2 1730.4L2150.6 1729.5L2151.0 1728.4L2151.4 1727.0L2151.8 1725.5L2152.2 1724.3L2152.5 1723.7L2152.9 1723.8L2153.3 1724.7L2153.7 1726.0L2154.1 1727.4L2154.5 1728.8L2154.9 1729.8L2155.3 1730.6L2155.7 1731.0L2156.1 1731.3M2268.2 1731.3L2268.6 1731.1L2269.0 1730.7L2269.4 1730.3L2269.7 1729.8L2270.1 1729.3L2270.5 1728.9L2270.9 1728.7L2271.3 1728.8L2271.7 1729.1L2272.1 1729.6L2272.5 1730.1L2272.9 1730.6L2273.3 1731.0L2273.7 1731.2" stroke="#6262ff" stroke-width="3.6" fill="#6262ff"/>
<path d="M820.5 1731.3L820.9 1731.3L821.3 1731.3L821.7 1731.3L822.1 1731.2L822.4 1731.2L822.8 1731.2L823.2 1731.2L823.6 1731.1L824.0 1731.1L824.4 1731.0L824.8 1731.0L825.2 1730.9L825.6 1730.8L826.0 1730.8L826.4 1730.7L826.8 1730.5L827.2 1730.4L827.6 1730.1L827.9 1729.9L828.3 1729.5L828.7 1729.0L829.1 1727.8L829.5 1723.7L829.9 1707.8L830.3 1656.9L830.7 1536.0L831.1 1334.3L831.5 1118.6L831.9 1021.5L832.3 1118.6L832.7 1334.3L833.1 1536.0L833.5 1656.9L833.8 1707.8L834.2 1723.7L834.6 1727.8L835.0 1729.0L835.4 1729.5L835.8 1729.9L836.2 1730.1L836.6 1730.4L837.0 1730.5L837.4 1730.7L837.8 1730.8L838.2 1730.8L838.6 1730.9L839.0 1731.0L839.4 1731.0L839.7 1731.1L840.1 1731.1L840.5 1731.2L840.9 1731.2L841.3 1731.2L841.7 1731.2L842.1 1731.3L842.5 1731.3L842.9 1731.3L843.3 1731.3M1210.2 1731.3L1210.6 1731.1L1211.0 1730.4L1211.4 1728.4L1211.8 1723.7L1212.2 1715.0L1212.6 1702.9L1213.0 1691.6L1213.4 1686.9L1213.8 1691.6L1214.2 1702.9L1214.6 1715.0L1214.9 1723.7L1215.3 1728.4L1215.7 1730.4L1216.1 1731.1L1216.5 1731.3M1235.0 1731.3L1235.4 1731.3L1235.8 1731.2L1236.2 1731.2L1236.6 1731.2L1237.0 1731.1L1237.4 1731.0L1237.8 1730.8L1238.1 1730.1L1238.5 1728.1L1238.9 1722.0L1239.3 1707.4L1239.7 1680.5L1240.1 1643.4L1240.5 1608.6L1240.9 1593.9L1241.3 1608.6L1241.7 1643.4L1242.1 1680.5L1242.5 1707.4L1242.9 1722.0L1243.3 1728.1L1243.7 1730.1L1244.0 1730.8L1244.4 1731.0L1244.8 1731.1L1245.2 1731.2L1245.6 1731.2L1246.0 1731.2L1246.4 1731.3L1246.8 1731.3M1263.7 1731.3L1264.1 1731.2L1264.5 1730.8L1264.9 1729.7L1265.3 1726.5L1265.7 1719.7L1266.1 1708.1L1266.5 1693.8L1266.9 1682.5L1267.3 1680.7L1267.6 1689.3L1268.0 1703.4L1268.4 1716.3L1268.8 1724.8L1269.2 1728.9L1269.6 1730.6L1270.0 1731.1L1270.4 1731.3M1568.9 1731.3L1569.3 1731.3L1569.7 1731.2L1570.1 1731.2L1570.5 1731.2L1570.9 1731.1L1571.3 1731.1L1571.7 1731.0L1572.1 1730.9L1572.4 1730.7L1572.8 1730.3L1573.2 1729.1L1573.6 1725.7L1574.0 1717.2L1574.4 1699.1L1574.8 1667.8L1575.2 1624.6L1575.6 1579.9L1576.0 1550.5L1576.4 1550.5L1576.8 1579.9L1577.2 1624.6L1577.6 1667.8L1578.0 1699.1L1578.3 1717.2L1578.7 1725.7L1579.1 1729.1L1579.5 1730.3L1579.9 1730.7L1580.3 1730.9L1580.7 1731.0L1581.1 1731.1L1581.5 1731.1L1581.9 1731.2L1582.3 1731.2L1582.7 1731.2L1583.1 1731.3L1583.5 1731.3M1704.2 1731.2L1704.6 1731.1L1705.0 1731.0L1705.4 1731.0L1705.8 1731.0L1706.2 1731.1L1706.6 1731.3M1762.4 1731.3L1762.8 1731.3L1763.2 1731.2L1763.6 1731.2L1764.0 1731.1L1764.4 1731.1L1764.8 1730.9L1765.2 1730.4L1765.5 1728.9L1765.9 1725.1L1766.3 1716.4L1766.7 1700.2L1767.1 1676.2L1767.5 1648.4L1767.9 1626.4L1768.3 1620.0L1768.7 1632.4L1769.1 1657.6L1769.5 1684.9L1769.9 1706.5L1770.3 1720.0L1770.7 1726.7L1771.1 1729.6L1771.4 1730.6L1771.8 1730.9L1772.2 1731.1L1772.6 1731.2L1773.0 1731.2L1773.4 1731.3L1773.8 1731.3L1774.2 1731.3M1801.3 1731.3L1801.7 1731.3L1802.1 1731.2L1802.5 1731.2L1802.9 1731.1L1803.3 1731.0L1803.7 1730.6L1804.1 1729.6L1804.5 1726.8L1804.9 1720.2L1805.3 1706.9L1805.7 1685.7L1806.1 1658.8L1806.5 1634.0L1806.8 1621.7L1807.2 1628.1L1807.6 1649.8L1808.0 1677.0L1808.4 1700.7L1808.8 1716.6L1809.2 1725.2L1809.6 1729.0L1810.0 1730.4L1810.4 1730.9L1810.8 1731.1L1811.2 1731.1L1811.6 1731.2L1812.0 1731.2L1812.3 1731.3L1812.7 1731.3M2035.0 1731.3L2035.3 1731.0L2035.7 1730.5L2036.1 1729.3L2036.5 1727.1L2036.9 1723.9L2037.3 1720.0L2037.7 1716.2L2038.1 1713.8L2038.5 1713.8L2038.9 1716.2L2039.3 1720.0L2039.7 1723.9L2040.1 1727.1L2040.5 1729.3L2040.9 1730.5L2041.2 1731.0L2041.6 1731.3M2051.9 1731.3L2052.3 1731.3L2052.6 1731.2L2053.0 1731.2L2053.4 1731.1L2053.8 1730.8L2054.2 1730.0L2054.6 1728.2L2055.0 1724.2L2055.4 1716.6L2055.8 1704.5L2056.2 1688.5L2056.6 1671.7L2057.0 1659.2L2057.4 1655.6L2057.8 1662.5L2058.2 1677.1L2058.5 1694.2L2058.9 1709.1L2059.3 1719.6L2059.7 1725.9L2060.1 1729.0L2060.5 1730.4L2060.9 1730.9L2061.3 1731.1L2061.7 1731.2L2062.1 1731.3L2062.5 1731.3M2251.7 1731.3L2252.0 1731.0L2252.4 1730.4L2252.8 1729.1L2253.2 1726.5L2253.6 1722.0L2254.0 1715.7L2254.4 1708.5L2254.8 1702.3L2255.2 1699.4L2255.6 1700.9L2256.0 1706.2L2256.4 1713.3L2256.8 1720.1L2257.2 1725.2L2257.6 1728.4L2257.9 1730.1L2258.3 1730.9L2258.7 1731.2" stroke="#14b014" stroke-width="3.6" fill="#14b014"/>
<path d="M167.2 1730.7L167.9 1730.4L168.7 1730.7L169.4 1730.4L170.1 1729.5L170.8 1730.2L171.6 1729.2L172.3 1729.6L173.0 1728.6L173.7 1729.3L174.4 1728.9L175.2 1728.8L175.9 1726.6L176.6 1727.4L177.3 1727.0L178.0 1726.5L178.8 1724.8L179.5 1723.8L180.2 1724.5L180.9 1724.9L181.6 1725.3L182.4 1725.6L183.1 1725.1L183.8 1725.3L184.5 1726.1L185.3 1726.3L186.0 1726.5L186.7 1725.7L187.4 1727.2L188.1 1727.0L188.9 1728.6L189.6 1728.5L190.3 1729.2L191.0 1729.9L191.7 1729.5L192.5 1730.1L193.2 1730.1L193.9 1729.5L194.6 1730.0L195.3 1729.5L196.1 1730.2L196.8 1730.8L197.5 1730.5L198.2 1729.3L199.0 1730.9L199.7 1729.5L200.4 1728.8L201.1 1730.4L201.8 1730.9L202.6 1730.1L203.3 1730.7L204.0 1731.2L204.7 1729.3L205.4 1730.4L206.2 1730.2L206.9 1729.9L207.6 1729.2L208.3 1730.4L209.0 1730.9L209.8 1729.6L210.5 1730.7L211.2 1730.5L211.9 1730.5L212.7 1729.5L213.4 1729.7L214.1 1730.3L214.8 1729.7L215.5 1728.9L216.3 1729.0L217.0 1731.2L217.7 1729.4L218.4 1730.2L219.1 1728.9L219.9 1727.7L220.6 1731.1L221.3 1730.2L222.0 1729.6L222.7 1730.1L223.5 1729.6L224.2 1730.7L224.9 1730.7L225.6 1730.4L226.4 1728.9L227.1 1729.8L227.8 1729.9L228.5 1729.8L229.2 1728.6L230.0 1728.9L230.7 1728.6L231.4 1728.9L232.1 1727.2L232.8 1728.1L233.6 1728.1L234.3 1726.6L235.0 1728.0L235.7 1727.3L236.4 1727.0L237.2 1726.8L237.9 1727.8L238.6 1728.9L239.3 1728.9L240.0 1728.7L240.8 1729.5L241.5 1728.6L242.2 1729.7L242.9 1729.9L243.7 1729.4L244.4 1730.6L245.1 1729.8L245.8 1729.9L246.5 1729.0L247.3 1730.8L248.0 1729.3L248.7 1730.7L249.4 1730.9L250.1 1730.8L250.9 1729.5L251.6 1730.2L252.3 1729.8L253.0 1729.8L253.7 1730.0L254.5 1730.6L255.2 1729.7L255.9 1729.9L256.6 1730.6L257.4 1731.0L258.1 1731.0L258.8 1730.5L259.5 1731.1L260.2 1730.9L261.0 1730.5L261.7 1731.1L262.4 1730.3L263.1 1730.4L263.8 1728.6L264.6 1730.4L265.3 1730.8L266.0 1730.7L266.7 1731.2L267.4 1730.1L268.2 1731.0L268.9 1730.8L269.6 1728.9L270.3 1728.4L271.1 1729.4L271.8 1731.2L272.5 1730.7L273.2 1730.9L273.9 1730.8L274.7 1730.5L275.4 1730.8L276.1 1730.7L276.8 1728.3L277.5 1730.4L278.3 1730.7L279.0 1731.0L279.7 1730.9L280.4 1731.1L281.1 1727.8L281.9 1730.1L282.6 1730.2L283.3 1729.9L284.0 1731.0L284.8 1730.1L285.5 1730.0L286.2 1729.2L286.9 1729.4L287.6 1730.5L288.4 1730.7L289.1 1730.5L289.8 1729.8L290.5 1728.1L291.2 1730.3L292.0 1729.5L292.7 1730.6L293.4 1729.4L294.1 1731.2L294.8 1729.7L295.6 1731.2L296.3 1730.9L297.0 1730.1L297.7 1730.8L298.5 1731.1L299.2 1729.2L299.9 1729.4L300.6 1730.8L301.3 1727.4L302.1 1729.8L302.8 1729.5L303.5 1730.1L304.2 1729.9L304.9 1728.9L305.7 1729.1L306.4 1728.4L307.1 1727.3L307.8 1726.8L308.5 1728.6L309.3 1728.0L310.0 1727.8L310.7 1727.5L311.4 1728.5L312.2 1729.0L312.9 1728.3L313.6 1729.7L314.3 1730.6L315.0 1729.4L315.8 1730.2L316.5 1728.9L317.2 1730.3L317.9 1729.3L318.6 1729.6L319.4 1731.2L320.1 1728.7L320.8 1729.8L321.5 1731.1L322.2 1730.5L323.0 1730.8L323.7 1730.6L324.4 1729.3L325.1 1730.2L325.9 1729.9L326.6 1729.2L327.3 1729.1L328.0 1731.1L328.7 1730.3L329.5 1730.1L330.2 1730.9L330.9 1731.0L331.6 1729.4L332.3 1731.2L333.1 1728.3L333.8 1730.3L334.5 1728.8L335.2 1730.6L335.9 1730.7L336.7 1730.5L337.4 1731.1L338.1 1730.2L338.8 1731.0L339.6 1729.5L340.3 1731.1L341.0 1729.9L341.7 1729.2L342.4 1728.9L343.2 1730.7L343.9 1730.2L344.6 1729.0L345.3 1729.5L346.0 1728.5L346.8 1730.3L347.5 1729.8L348.2 1731.0L348.9 1730.9L349.6 1731.1L350.4 1730.5L351.1 1731.0L351.8 1728.9L352.5 1730.8L353.3 1730.5L354.0 1729.8L354.7 1731.1L355.4 1729.6L356.1 1730.2L356.9 1730.0L357.6 1729.3L358.3 1730.1L359.0 1730.0L359.7 1730.0L360.5 1730.9L361.2 1730.1L361.9 1730.7L362.6 1729.7L363.3 1728.9L364.1 1729.9L364.8 1730.1L365.5 1730.5L366.2 1729.8L367.0 1729.8L367.7 1728.9L368.4 1730.5L369.1 1729.4L369.8 1730.6L370.6 1727.9L371.3 1730.7L372.0 1729.9L372.7 1728.1L373.4 1730.0L374.2 1730.1L374.9 1727.3L375.6 1728.3L376.3 1729.2L377.0 1727.9L377.8 1726.4L378.5 1724.4L379.2 1722.0L379.9 1719.3L380.7 1714.5L381.4 1711.3L382.1 1708.1L382.8 1703.8L383.5 1704.5L384.3 1704.5L385.0 1708.7L385.7 1711.8L386.4 1713.9L387.1 1718.0L387.9 1722.7L388.6 1722.4L389.3 1726.6L390.0 1727.7L390.7 1726.8L391.5 1729.6L392.2 1729.4L392.9 1729.1L393.6 1729.6L394.3 1730.4L395.1 1730.4L395.8 1729.7L396.5 1730.7L397.2 1730.6L398.0 1729.6L398.7 1730.3L399.4 1729.9L400.1 1730.7L400.8 1730.0L401.6 1729.8L402.3 1727.9L403.0 1729.2L403.7 1730.0L404.4 1728.0L405.2 1730.8L405.9 1730.5L406.6 1728.9L407.3 1730.3L408.0 1731.1L408.8 1730.5L409.5 1728.8L410.2 1730.2L410.9 1730.6L411.7 1730.4L412.4 1729.6L413.1 1728.7L413.8 1729.8L414.5 1730.2L415.3 1731.0L416.0 1730.9L416.7 1730.8L417.4 1729.9L418.1 1728.8L418.9 1729.5L419.6 1730.0L420.3 1729.4L421.0 1729.4L421.7 1729.7L422.5 1728.7L423.2 1729.8L423.9 1730.4L424.6 1731.0L425.4 1728.6L426.1 1729.9L426.8 1731.0L427.5 1730.6L428.2 1730.4L429.0 1731.0L429.7 1730.7L430.4 1730.7L431.1 1730.4L431.8 1730.9L432.6 1730.9L433.3 1730.3L434.0 1731.1L434.7 1730.3L435.4 1730.3L436.2 1731.1L436.9 1731.1L437.6 1731.1L438.3 1731.2L439.1 1731.0L439.8 1731.1L440.5 1729.7L441.2 1731.0L441.9 1729.9L442.7 1730.5L443.4 1731.1L444.1 1730.7L444.8 1730.1L445.5 1728.7L446.3 1731.0L447.0 1730.1L447.7 1730.5L448.4 1730.0L449.1 1727.8L449.9 1729.4L450.6 1729.6L451.3 1731.0L452.0 1729.5L452.8 1730.1L453.5 1730.8L454.2 1730.6L454.9 1730.9L455.6 1729.4L456.4 1730.1L457.1 1731.1L457.8 1730.5L458.5 1729.1L459.2 1729.7L460.0 1729.8L460.7 1730.1L461.4 1730.9L462.1 1730.4L462.8 1731.0L463.6 1730.0L464.3 1730.3L465.0 1730.0L465.7 1731.2L466.5 1728.1L467.2 1729.2L467.9 1731.2L468.6 1731.2L469.3 1728.0L470.1 1731.2L470.8 1730.2L471.5 1729.9L472.2 1731.1L472.9 1729.8L473.7 1731.3L474.4 1730.8L475.1 1729.8L475.8 1730.1L476.5 1731.1L477.3 1730.2L478.0 1730.4L478.7 1730.9L479.4 1731.2L480.2 1731.0L480.9 1730.5L481.6 1730.1L482.3 1730.3L483.0 1731.1L483.8 1729.4L484.5 1730.5L485.2 1728.6L485.9 1730.0L486.6 1730.8L487.4 1730.5L488.1 1731.2L488.8 1731.0L489.5 1729.5L490.2 1729.3L491.0 1730.3L491.7 1729.8L492.4 1730.4L493.1 1730.9L493.9 1728.9L494.6 1730.7L495.3 1730.0L496.0 1729.1L496.7 1730.9L497.5 1730.6L498.2 1729.2L498.9 1728.7L499.6 1729.6L500.3 1730.2L501.1 1729.4L501.8 1731.0L502.5 1731.0L503.2 1730.4L503.9 1730.3L504.7 1729.2L505.4 1729.5L506.1 1729.9L506.8 1730.4L507.6 1729.8L508.3 1729.7L509.0 1730.9L509.7 1731.2L510.4 1730.7L511.2 1729.4L511.9 1729.4L512.6 1731.0L513.3 1731.0L514.0 1730.9L514.8 1731.1L515.5 1730.3L516.2 1730.6L516.9 1730.7L517.6 1731.3L518.4 1730.4L519.1 1730.9L519.8 1727.8L520.5 1729.5L521.3 1731.1L522.0 1729.4L522.7 1731.2L523.4 1731.1L524.1 1729.6L524.9 1730.7L525.6 1730.8L526.3 1730.8L527.0 1730.4L527.7 1731.2L528.5 1730.2L529.2 1730.9L529.9 1731.2L530.6 1730.4L531.3 1730.8L532.1 1730.5L532.8 1729.5L533.5 1730.5L534.2 1730.2L535.0 1729.7L535.7 1730.9L536.4 1730.6L537.1 1731.3L537.8 1730.6L538.6 1730.9L539.3 1728.4L540.0 1731.3L540.7 1729.9L541.4 1730.9L542.2 1729.8L542.9 1728.5L543.6 1729.9L544.3 1731.2L545.0 1730.5L545.8 1728.2L546.5 1730.4L547.2 1729.5L547.9 1730.1L548.6 1729.9L549.4 1730.4L550.1 1731.2L550.8 1730.7L551.5 1730.0L552.3 1730.0L553.0 1730.2L553.7 1731.1L554.4 1728.6L555.1 1731.2L555.9 1731.2L556.6 1729.8L557.3 1731.0L558.0 1730.3L558.7 1731.1L559.5 1730.5L560.2 1730.3L560.9 1730.5L561.6 1729.2L562.3 1728.9L563.1 1730.9L563.8 1730.9L564.5 1730.8L565.2 1729.6L566.0 1730.7L566.7 1730.5L567.4 1730.8L568.1 1730.3L568.8 1730.5L569.6 1729.5L570.3 1731.0L571.0 1730.5L571.7 1730.4L572.4 1731.2L573.2 1730.9L573.9 1729.3L574.6 1729.6L575.3 1730.9L576.0 1728.5L576.8 1730.9L577.5 1730.2L578.2 1730.6L578.9 1731.1L579.7 1729.1L580.4 1729.4L581.1 1729.3L581.8 1730.1L582.5 1729.2L583.3 1728.9L584.0 1730.2L584.7 1730.9L585.4 1731.1L586.1 1730.9L586.9 1731.1L587.6 1729.9L588.3 1731.1L589.0 1729.4L589.7 1730.9L590.5 1730.9L591.2 1730.6L591.9 1731.1L592.6 1730.1L593.4 1731.3L594.1 1730.7L594.8 1729.4L595.5 1730.0L596.2 1731.2L597.0 1730.7L597.7 1730.3L598.4 1730.0L599.1 1730.6L599.8 1731.0L600.6 1730.6L601.3 1730.5L602.0 1728.5L602.7 1730.8L603.4 1731.2L604.2 1727.8L604.9 1729.5L605.6 1730.3L606.3 1731.2L607.1 1731.1L607.8 1730.7L608.5 1731.1L609.2 1730.8L609.9 1731.1L610.7 1730.3L611.4 1729.0L612.1 1729.8L612.8 1731.1L613.5 1729.9L614.3 1729.8L615.0 1730.7L615.7 1730.5L616.4 1730.6L617.1 1730.2L617.9 1730.7L618.6 1730.5L619.3 1731.2L620.0 1729.5L620.8 1731.0L621.5 1730.7L622.2 1730.7L622.9 1731.1L623.6 1730.4L624.4 1730.3L625.1 1730.6L625.8 1728.8L626.5 1730.9L627.2 1731.1L628.0 1731.1L628.7 1729.4L629.4 1730.6L630.1 1730.0L630.8 1730.6L631.6 1731.1L632.3 1731.2L633.0 1729.0L633.7 1729.8L634.5 1729.9L635.2 1729.3L635.9 1730.6L636.6 1731.2L637.3 1730.7L638.1 1730.7L638.8 1729.4L639.5 1730.7L640.2 1729.4L640.9 1730.8L641.7 1729.9L642.4 1729.3L643.1 1729.4L643.8 1731.1L644.5 1729.1L645.3 1730.4L646.0 1730.8L646.7 1728.4L647.4 1731.0L648.2 1730.3L648.9 1730.7L649.6 1730.4L650.3 1730.0L651.0 1729.6L651.8 1731.1L652.5 1730.9L653.2 1729.6L653.9 1730.7L654.6 1730.4L655.4 1730.7L656.1 1731.1L656.8 1731.0L657.5 1730.7L658.2 1729.9L659.0 1729.2L659.7 1731.0L660.4 1730.1L661.1 1730.3L661.9 1731.1L662.6 1730.1L663.3 1729.0L664.0 1730.9L664.7 1730.9L665.5 1730.8L666.2 1729.1L666.9 1730.7L667.6 1730.0L668.3 1730.5L669.1 1729.5L669.8 1728.1L670.5 1730.3L671.2 1730.3L671.9 1729.8L672.7 1729.2L673.4 1729.7L674.1 1728.6L674.8 1728.2L675.6 1725.6L676.3 1724.7L677.0 1723.3L677.7 1719.7L678.4 1717.5L679.2 1713.9L679.9 1710.6L680.6 1709.3L681.3 1707.0L682.0 1709.8L682.8 1710.0L683.5 1715.7L684.2 1719.3L684.9 1722.1L685.6 1723.5L686.4 1725.4L687.1 1725.3L687.8 1728.8L688.5 1728.7L689.3 1729.2L690.0 1726.9L690.7 1729.8L691.4 1730.2L692.1 1729.5L692.9 1730.1L693.6 1728.7L694.3 1729.7L695.0 1730.3L695.7 1726.5L696.5 1730.6L697.2 1730.5L697.9 1729.8L698.6 1728.1L699.3 1730.5L700.1 1730.7L700.8 1730.3L701.5 1729.8L702.2 1730.0L702.9 1730.4L703.7 1730.9L704.4 1730.9L705.1 1730.8L705.8 1729.9L706.6 1730.3L707.3 1731.0L708.0 1730.2L708.7 1731.0L709.4 1729.6L710.2 1729.4L710.9 1730.2L711.6 1730.0L712.3 1729.9L713.0 1730.4L713.8 1729.2L714.5 1729.3L715.2 1730.4L715.9 1729.8L716.6 1730.6L717.4 1730.9L718.1 1729.1L718.8 1730.1L719.5 1730.9L720.3 1730.7L721.0 1730.7L721.7 1730.9L722.4 1730.2L723.1 1730.7L723.9 1730.9L724.6 1728.3L725.3 1730.1L726.0 1730.3L726.7 1729.2L727.5 1730.8L728.2 1730.8L728.9 1729.0L729.6 1730.9L730.3 1730.1L731.1 1728.7L731.8 1730.6L732.5 1729.4L733.2 1730.3L734.0 1730.8L734.7 1730.9L735.4 1730.8L736.1 1729.5L736.8 1727.7L737.6 1730.5L738.3 1730.1L739.0 1730.3L739.7 1729.6L740.4 1730.4L741.2 1730.0L741.9 1730.5L742.6 1730.1L743.3 1728.8L744.0 1730.0L744.8 1728.8L745.5 1729.4L746.2 1729.6L746.9 1729.8L747.7 1729.4L748.4 1730.0L749.1 1729.6L749.8 1729.2L750.5 1727.4L751.3 1728.6L752.0 1727.6L752.7 1725.3L753.4 1724.7L754.1 1721.7L754.9 1717.7L755.6 1714.4L756.3 1712.4L757.0 1711.1L757.7 1708.5L758.5 1706.4L759.2 1706.7L759.9 1709.0L760.6 1710.3L761.4 1714.6L762.1 1716.5L762.8 1719.6L763.5 1721.9L764.2 1725.1L765.0 1724.5L765.7 1727.4L766.4 1728.2L767.1 1728.9L767.8 1728.9L768.6 1728.7L769.3 1729.4L770.0 1730.0L770.7 1729.4L771.4 1730.2L772.2 1729.4L772.9 1728.7L773.6 1728.0L774.3 1729.8L775.1 1729.8L775.8 1727.2L776.5 1728.6L777.2 1729.8L777.9 1730.3L778.7 1729.8L779.4 1728.9L780.1 1730.1L780.8 1730.4L781.5 1728.2L782.3 1730.4L783.0 1728.9L783.7 1728.3L784.4 1729.7L785.1 1730.0L785.9 1729.7L786.6 1729.7L787.3 1728.6L788.0 1730.3L788.8 1729.2L789.5 1729.9L790.2 1729.4L790.9 1729.3L791.6 1729.9L792.4 1728.0L793.1 1729.2L793.8 1730.0L794.5 1728.6L795.2 1728.8L796.0 1729.9L796.7 1728.7L797.4 1729.1L798.1 1729.0L798.8 1729.7L799.6 1728.0L800.3 1729.4L801.0 1728.8L801.7 1728.4L802.5 1729.1L803.2 1728.9L803.9 1728.4L804.6 1728.6L805.3 1728.2L806.1 1728.2L806.8 1727.2L807.5 1728.2L808.2 1728.0L808.9 1726.9L809.7 1727.2L810.4 1727.5L811.1 1727.0L811.8 1726.3L812.5 1725.1L813.3 1726.0L814.0 1725.7L814.7 1724.8L815.4 1722.6L816.2 1724.6L816.9 1722.7L817.6 1722.9L818.3 1721.7L819.0 1718.8L819.8 1717.8L820.5 1718.3L821.2 1717.2L821.9 1715.7L822.6 1712.5L823.4 1707.6L824.1 1705.0L824.8 1696.1L825.5 1684.7L826.2 1661.5L827.0 1625.0L827.7 1566.1L828.4 1479.7L829.1 1364.2L829.9 1233.4L830.6 1103.0L831.3 1008.0L832.0 983.5L832.7 1037.2L833.5 1148.6L834.2 1281.9L834.9 1409.3L835.6 1513.8L836.3 1588.5L837.1 1641.2L837.8 1671.9L838.5 1689.9L839.2 1700.0L839.9 1704.5L840.7 1711.2L841.4 1713.7L842.1 1713.2L842.8 1717.6L843.6 1719.3L844.3 1721.0L845.0 1720.9L845.7 1722.6L846.4 1722.3L847.2 1723.6L847.9 1724.8L848.6 1724.9L849.3 1725.8L850.0 1725.5L850.8 1724.6L851.5 1726.0L852.2 1726.8L852.9 1726.9L853.6 1727.6L854.4 1726.7L855.1 1727.2L855.8 1728.1L856.5 1727.9L857.2 1727.9L858.0 1728.5L858.7 1726.2L859.4 1727.9L860.1 1728.6L860.9 1729.2L861.6 1729.0L862.3 1729.2L863.0 1729.0L863.7 1728.2L864.5 1728.5L865.2 1728.8L865.9 1728.9L866.6 1728.2L867.3 1729.3L868.1 1728.4L868.8 1729.4L869.5 1728.8L870.2 1729.8L870.9 1728.3L871.7 1729.6L872.4 1729.3L873.1 1730.1L873.8 1730.1L874.6 1728.1L875.3 1729.2L876.0 1730.3L876.7 1729.8L877.4 1730.4L878.2 1729.5L878.9 1729.3L879.6 1729.1L880.3 1729.5L881.0 1730.3L881.8 1730.4L882.5 1730.2L883.2 1730.1L883.9 1730.2L884.6 1728.3L885.4 1729.8L886.1 1730.4L886.8 1729.3L887.5 1730.4L888.3 1730.0L889.0 1730.5L889.7 1728.0L890.4 1727.8L891.1 1730.0L891.9 1728.3L892.6 1729.8L893.3 1727.2L894.0 1728.1L894.7 1730.4L895.5 1730.1L896.2 1730.4L896.9 1730.0L897.6 1728.0L898.3 1730.0L899.1 1730.1L899.8 1730.6L900.5 1730.0L901.2 1730.0L902.0 1730.2L902.7 1730.5L903.4 1730.1L904.1 1727.8L904.8 1730.2L905.6 1730.5L906.3 1729.7L907.0 1729.8L907.7 1730.5L908.4 1730.0L909.2 1730.4L909.9 1729.1L910.6 1728.0L911.3 1730.0L912.0 1728.2L912.8 1730.0L913.5 1728.7L914.2 1729.2L914.9 1729.4L915.7 1730.1L916.4 1729.7L917.1 1729.7L917.8 1729.6L918.5 1728.2L919.3 1729.0L920.0 1727.7L920.7 1727.7L921.4 1730.1L922.1 1729.6L922.9 1730.4L923.6 1729.6L924.3 1729.0L925.0 1730.4L925.7 1729.1L926.5 1729.0L927.2 1729.9L927.9 1730.2L928.6 1730.4L929.4 1729.9L930.1 1730.0L930.8 1729.4L931.5 1727.8L932.2 1727.0L933.0 1728.1L933.7 1728.8L934.4 1729.8L935.1 1729.8L935.8 1729.1L936.6 1729.4L937.3 1728.6L938.0 1728.3L938.7 1726.4L939.4 1728.3L940.2 1728.2L940.9 1727.7L941.6 1728.1L942.3 1727.6L943.1 1726.3L943.8 1726.8L944.5 1725.6L945.2 1725.2L945.9 1725.1L946.7 1723.3L947.4 1723.9L948.1 1723.3L948.8 1722.1L949.5 1721.4L950.3 1720.2L951.0 1718.9L951.7 1720.5L952.4 1719.6L953.1 1718.3L953.9 1718.2L954.6 1717.4L955.3 1717.3L956.0 1717.2L956.8 1717.2L957.5 1714.9L958.2 1714.9L958.9 1712.0L959.6 1708.5L960.4 1701.8L961.1 1691.4L961.8 1676.0L962.5 1656.6L963.2 1630.7L964.0 1596.8L964.7 1564.1L965.4 1533.9L966.1 1510.5L966.8 1501.0L967.6 1506.6L968.3 1529.4L969.0 1559.7L969.7 1595.0L970.5 1627.0L971.2 1655.5L971.9 1677.3L972.6 1692.4L973.3 1704.0L974.1 1712.7L974.8 1717.5L975.5 1720.1L976.2 1722.3L976.9 1723.2L977.7 1722.4L978.4 1724.6L979.1 1725.8L979.8 1725.0L980.5 1725.1L981.3 1727.2L982.0 1727.9L982.7 1726.8L983.4 1728.2L984.2 1727.2L984.9 1728.7L985.6 1728.4L986.3 1729.0L987.0 1728.9L987.8 1728.4L988.5 1727.9L989.2 1729.0L989.9 1727.3L990.6 1729.2L991.4 1728.8L992.1 1728.5L992.8 1729.3L993.5 1729.7L994.2 1728.6L995.0 1729.7L995.7 1728.4L996.4 1729.0L997.1 1730.1L997.9 1730.0L998.6 1730.1L999.3 1730.1L1000.0 1729.3L1000.7 1730.2L1001.5 1727.2L1002.2 1729.7L1002.9 1729.0L1003.6 1729.5L1004.3 1729.4L1005.1 1729.9L1005.8 1727.1L1006.5 1728.8L1007.2 1727.8L1007.9 1726.9L1008.7 1725.1L1009.4 1724.7L1010.1 1726.6L1010.8 1724.6L1011.5 1721.6L1012.3 1720.4L1013.0 1720.7L1013.7 1718.9L1014.4 1718.1L1015.2 1717.7L1015.9 1716.1L1016.6 1715.4L1017.3 1717.1L1018.0 1719.2L1018.8 1720.2L1019.5 1719.0L1020.2 1719.8L1020.9 1722.3L1021.6 1722.0L1022.4 1722.3L1023.1 1722.7L1023.8 1722.3L1024.5 1721.4L1025.2 1722.6L1026.0 1722.0L1026.7 1723.5L1027.4 1724.6L1028.1 1724.8L1028.9 1725.4L1029.6 1726.3L1030.3 1726.1L1031.0 1726.8L1031.7 1727.9L1032.5 1726.8L1033.2 1728.8L1033.9 1729.6L1034.6 1729.7L1035.3 1730.1L1036.1 1730.3L1036.8 1729.3L1037.5 1729.0L1038.2 1728.9L1038.9 1728.8L1039.7 1729.8L1040.4 1729.9L1041.1 1730.5L1041.8 1730.5L1042.6 1730.8L1043.3 1730.1L1044.0 1730.3L1044.7 1729.9L1045.4 1729.8L1046.2 1730.7L1046.9 1730.6L1047.6 1729.1L1048.3 1730.5L1049.0 1730.3L1049.8 1729.5L1050.5 1730.9L1051.2 1730.0L1051.9 1729.8L1052.6 1730.0L1053.4 1730.6L1054.1 1729.1L1054.8 1730.5L1055.5 1730.0L1056.3 1729.6L1057.0 1730.4L1057.7 1730.8L1058.4 1730.8L1059.1 1730.7L1059.9 1730.8L1060.6 1730.4L1061.3 1730.3L1062.0 1731.0L1062.7 1730.8L1063.5 1727.7L1064.2 1730.1L1064.9 1730.9L1065.6 1728.9L1066.3 1730.9L1067.1 1730.5L1067.8 1729.7L1068.5 1729.9L1069.2 1729.3L1070.0 1731.0L1070.7 1728.1L1071.4 1730.8L1072.1 1730.2L1072.8 1730.8L1073.6 1729.6L1074.3 1729.9L1075.0 1729.8L1075.7 1728.9L1076.4 1729.7L1077.2 1730.5L1077.9 1728.9L1078.6 1729.9L1079.3 1730.0L1080.0 1729.8L1080.8 1730.4L1081.5 1730.5L1082.2 1730.6L1082.9 1730.7L1083.7 1730.6L1084.4 1730.4L1085.1 1729.6L1085.8 1729.0L1086.5 1729.5L1087.3 1727.9L1088.0 1728.0L1088.7 1728.7L1089.4 1727.2L1090.1 1726.2L1090.9 1726.8L1091.6 1726.9L1092.3 1724.6L1093.0 1725.1L1093.7 1724.9L1094.5 1724.0L1095.2 1723.3L1095.9 1725.0L1096.6 1724.2L1097.4 1726.2L1098.1 1725.9L1098.8 1727.2L1099.5 1726.7L1100.2 1728.0L1101.0 1728.1L1101.7 1728.7L1102.4 1729.5L1103.1 1729.9L1103.8 1729.4L1104.6 1730.0L1105.3 1728.3L1106.0 1730.7L1106.7 1730.3L1107.4 1730.8L1108.2 1729.8L1108.9 1730.4L1109.6 1730.8L1110.3 1730.6L1111.1 1730.4L1111.8 1728.9L1112.5 1731.0L1113.2 1728.5L1113.9 1728.8L1114.7 1729.7L1115.4 1730.1L1116.1 1728.7L1116.8 1731.0L1117.5 1731.0L1118.3 1729.7L1119.0 1730.7L1119.7 1729.4L1120.4 1730.2L1121.1 1730.4L1121.9 1731.0L1122.6 1730.9L1123.3 1729.3L1124.0 1730.1L1124.8 1730.8L1125.5 1729.7L1126.2 1730.0L1126.9 1729.9L1127.6 1730.2L1128.4 1729.7L1129.1 1729.6L1129.8 1730.2L1130.5 1729.9L1131.2 1730.6L1132.0 1729.2L1132.7 1729.9L1133.4 1730.2L1134.1 1730.9L1134.8 1730.7L1135.6 1728.5L1136.3 1731.0L1137.0 1729.2L1137.7 1730.3L1138.5 1729.7L1139.2 1730.0L1139.9 1729.9L1140.6 1730.2L1141.3 1729.6L1142.1 1729.8L1142.8 1730.2L1143.5 1730.6L1144.2 1729.2L1144.9 1730.2L1145.7 1730.3L1146.4 1729.7L1147.1 1730.6L1147.8 1730.2L1148.5 1730.1L1149.3 1729.6L1150.0 1728.3L1150.7 1730.7L1151.4 1729.3L1152.2 1730.6L1152.9 1729.9L1153.6 1727.5L1154.3 1730.7L1155.0 1729.5L1155.8 1730.4L1156.5 1729.7L1157.2 1728.9L1157.9 1729.2L1158.6 1730.6L1159.4 1729.6L1160.1 1729.7L1160.8 1729.1L1161.5 1730.1L1162.2 1728.9L1163.0 1730.4L1163.7 1730.1L1164.4 1729.5L1165.1 1728.0L1165.8 1729.5L1166.6 1730.0L1167.3 1728.6L1168.0 1729.2L1168.7 1729.3L1169.5 1727.6L1170.2 1727.3L1170.9 1730.0L1171.6 1729.6L1172.3 1729.5L1173.1 1728.0L1173.8 1727.2L1174.5 1727.4L1175.2 1724.7L1175.9 1723.8L1176.7 1721.5L1177.4 1718.1L1178.1 1714.7L1178.8 1709.0L1179.5 1705.3L1180.3 1703.2L1181.0 1700.8L1181.7 1698.4L1182.4 1701.6L1183.2 1704.2L1183.9 1706.9L1184.6 1710.7L1185.3 1715.5L1186.0 1718.5L1186.8 1721.1L1187.5 1725.1L1188.2 1726.3L1188.9 1724.7L1189.6 1728.1L1190.4 1727.9L1191.1 1728.4L1191.8 1727.8L1192.5 1728.6L1193.2 1730.0L1194.0 1729.5L1194.7 1729.8L1195.4 1729.6L1196.1 1729.2L1196.9 1729.7L1197.6 1729.4L1198.3 1729.4L1199.0 1729.6L1199.7 1729.5L1200.5 1729.8L1201.2 1728.0L1201.9 1729.6L1202.6 1729.7L1203.3 1728.8L1204.1 1729.3L1204.8 1728.0L1205.5 1727.6L1206.2 1727.9L1206.9 1727.0L1207.7 1724.9L1208.4 1721.5L1209.1 1719.3L1209.8 1713.1L1210.6 1708.1L1211.3 1700.6L1212.0 1695.3L1212.7 1690.2L1213.4 1688.0L1214.2 1692.0L1214.9 1697.0L1215.6 1700.6L1216.3 1709.5L1217.0 1715.5L1217.8 1719.6L1218.5 1723.3L1219.2 1725.4L1219.9 1727.0L1220.6 1725.8L1221.4 1728.4L1222.1 1728.1L1222.8 1726.9L1223.5 1727.9L1224.3 1727.7L1225.0 1726.4L1225.7 1727.5L1226.4 1727.1L1227.1 1727.0L1227.9 1725.9L1228.6 1728.0L1229.3 1725.6L1230.0 1727.3L1230.7 1725.3L1231.5 1724.8L1232.2 1725.1L1232.9 1721.9L1233.6 1721.7L1234.3 1718.0L1235.1 1712.9L1235.8 1705.0L1236.5 1692.3L1237.2 1676.8L1238.0 1657.8L1238.7 1635.8L1239.4 1616.1L1240.1 1599.1L1240.8 1593.9L1241.6 1596.2L1242.3 1611.8L1243.0 1630.4L1243.7 1653.5L1244.4 1672.3L1245.2 1690.3L1245.9 1701.8L1246.6 1709.8L1247.3 1716.7L1248.0 1721.0L1248.8 1723.5L1249.5 1725.4L1250.2 1725.2L1250.9 1725.5L1251.7 1726.0L1252.4 1727.2L1253.1 1726.9L1253.8 1725.4L1254.5 1726.2L1255.3 1725.7L1256.0 1727.5L1256.7 1728.3L1257.4 1728.3L1258.1 1728.3L1258.9 1727.8L1259.6 1726.0L1260.3 1725.4L1261.0 1723.9L1261.7 1723.1L1262.5 1719.8L1263.2 1714.6L1263.9 1710.8L1264.6 1705.3L1265.4 1698.1L1266.1 1693.2L1266.8 1690.9L1267.5 1691.1L1268.2 1694.0L1269.0 1699.7L1269.7 1705.2L1270.4 1711.0L1271.1 1717.1L1271.8 1717.9L1272.6 1723.7L1273.3 1725.0L1274.0 1725.6L1274.7 1727.5L1275.4 1728.0L1276.2 1728.8L1276.9 1727.8L1277.6 1728.3L1278.3 1727.7L1279.1 1728.0L1279.8 1728.9L1280.5 1728.4L1281.2 1728.8L1281.9 1728.8L1282.7 1729.1L1283.4 1728.6L1284.1 1729.2L1284.8 1727.7L1285.5 1728.3L1286.3 1727.1L1287.0 1725.7L1287.7 1725.5L1288.4 1724.5L1289.1 1721.8L1289.9 1719.2L1290.6 1716.6L1291.3 1711.8L1292.0 1708.7L1292.8 1704.0L1293.5 1700.0L1294.2 1696.3L1294.9 1695.6L1295.6 1695.1L1296.4 1697.3L1297.1 1700.2L1297.8 1704.1L1298.5 1706.3L1299.2 1712.2L1300.0 1716.0L1300.7 1719.7L1301.4 1721.4L1302.1 1724.1L1302.8 1726.3L1303.6 1727.4L1304.3 1727.5L1305.0 1728.8L1305.7 1728.4L1306.5 1728.1L1307.2 1727.5L1307.9 1729.0L1308.6 1729.5L1309.3 1729.6L1310.1 1730.1L1310.8 1729.8L1311.5 1729.1L1312.2 1729.6L1312.9 1730.1L1313.7 1729.5L1314.4 1730.4L1315.1 1728.3L1315.8 1728.8L1316.5 1729.7L1317.3 1730.8L1318.0 1730.3L1318.7 1730.6L1319.4 1730.4L1320.1 1730.1L1320.9 1730.9L1321.6 1730.7L1322.3 1729.0L1323.0 1730.6L1323.8 1728.5L1324.5 1728.3L1325.2 1728.4L1325.9 1729.3L1326.6 1730.6L1327.4 1730.8L1328.1 1730.9L1328.8 1730.1L1329.5 1730.8L1330.2 1730.2L1331.0 1729.1L1331.7 1730.1L1332.4 1730.6L1333.1 1728.6L1333.8 1730.6L1334.6 1730.5L1335.3 1729.6L1336.0 1729.4L1336.7 1728.0L1337.5 1730.8L1338.2 1731.1L1338.9 1727.9L1339.6 1730.7L1340.3 1731.0L1341.1 1729.3L1341.8 1730.7L1342.5 1730.8L1343.2 1730.7L1343.9 1730.3L1344.7 1729.4L1345.4 1729.6L1346.1 1728.7L1346.8 1731.0L1347.5 1731.1L1348.3 1730.0L1349.0 1730.1L1349.7 1729.5L1350.4 1730.7L1351.2 1729.7L1351.9 1729.2L1352.6 1730.3L1353.3 1729.9L1354.0 1730.4L1354.8 1730.1L1355.5 1729.3L1356.2 1730.0L1356.9 1728.9L1357.6 1730.7L1358.4 1730.1L1359.1 1730.6L1359.8 1728.1L1360.5 1729.4L1361.2 1730.7L1362.0 1728.8L1362.7 1730.0L1363.4 1729.8L1364.1 1728.6L1364.9 1731.1L1365.6 1730.3L1366.3 1730.4L1367.0 1728.7L1367.7 1730.4L1368.5 1729.9L1369.2 1730.0L1369.9 1729.2L1370.6 1729.3L1371.3 1731.1L1372.1 1730.2L1372.8 1730.3L1373.5 1731.0L1374.2 1729.7L1374.9 1730.6L1375.7 1730.0L1376.4 1728.9L1377.1 1729.2L1377.8 1730.2L1378.6 1730.0L1379.3 1729.0L1380.0 1729.9L1380.7 1730.5L1381.4 1729.9L1382.2 1729.5L1382.9 1729.7L1383.6 1728.3L1384.3 1730.4L1385.0 1730.8L1385.8 1729.0L1386.5 1730.0L1387.2 1730.6L1387.9 1729.0L1388.6 1729.9L1389.4 1730.8L1390.1 1729.5L1390.8 1729.6L1391.5 1730.0L1392.3 1731.0L1393.0 1730.9L1393.7 1728.9L1394.4 1730.3L1395.1 1729.7L1395.9 1729.2L1396.6 1729.4L1397.3 1730.5L1398.0 1730.0L1398.7 1728.4L1399.5 1729.2L1400.2 1729.9L1400.9 1729.9L1401.6 1728.9L1402.3 1730.6L1403.1 1730.3L1403.8 1729.7L1404.5 1729.5L1405.2 1728.4L1406.0 1729.5L1406.7 1729.0L1407.4 1728.8L1408.1 1728.9L1408.8 1728.8L1409.6 1728.2L1410.3 1726.4L1411.0 1726.2L1411.7 1723.2L1412.4 1720.9L1413.2 1718.9L1413.9 1715.0L1414.6 1710.5L1415.3 1706.4L1416.0 1702.5L1416.8 1699.1L1417.5 1692.9L1418.2 1694.4L1418.9 1695.5L1419.7 1698.3L1420.4 1701.9L1421.1 1706.6L1421.8 1711.4L1422.5 1714.4L1423.3 1717.4L1424.0 1721.8L1424.7 1723.3L1425.4 1723.6L1426.1 1727.2L1426.9 1728.3L1427.6 1728.9L1428.3 1728.8L1429.0 1729.4L1429.7 1729.8L1430.5 1727.9L1431.2 1729.1L1431.9 1727.3L1432.6 1730.2L1433.4 1730.1L1434.1 1730.4L1434.8 1729.6L1435.5 1729.8L1436.2 1728.6L1437.0 1728.3L1437.7 1730.5L1438.4 1729.2L1439.1 1729.1L1439.8 1728.2L1440.6 1729.9L1441.3 1729.7L1442.0 1730.0L1442.7 1730.9L1443.4 1727.2L1444.2 1730.7L1444.9 1731.0L1445.6 1730.7L1446.3 1731.0L1447.1 1729.9L1447.8 1728.6L1448.5 1729.8L1449.2 1731.0L1449.9 1730.7L1450.7 1730.7L1451.4 1729.2L1452.1 1728.6L1452.8 1727.8L1453.5 1730.9L1454.3 1730.8L1455.0 1731.0L1455.7 1728.1L1456.4 1730.2L1457.1 1730.0L1457.9 1729.2L1458.6 1729.7L1459.3 1730.4L1460.0 1730.3L1460.8 1731.0L1461.5 1730.5L1462.2 1730.5L1462.9 1731.1L1463.6 1731.1L1464.4 1730.4L1465.1 1731.1L1465.8 1730.9L1466.5 1730.9L1467.2 1730.3L1468.0 1728.4L1468.7 1730.1L1469.4 1730.4L1470.1 1728.1L1470.8 1728.9L1471.6 1729.5L1472.3 1730.5L1473.0 1730.0L1473.7 1728.6L1474.4 1729.1L1475.2 1729.8L1475.9 1729.8L1476.6 1729.8L1477.3 1731.0L1478.1 1730.5L1478.8 1729.9L1479.5 1730.5L1480.2 1730.5L1480.9 1731.1L1481.7 1730.7L1482.4 1730.8L1483.1 1729.5L1483.8 1729.8L1484.5 1728.9L1485.3 1730.9L1486.0 1729.8L1486.7 1730.3L1487.4 1730.2L1488.1 1730.4L1488.9 1730.2L1489.6 1730.5L1490.3 1729.7L1491.0 1730.2L1491.8 1728.8L1492.5 1728.1L1493.2 1728.3L1493.9 1728.2L1494.6 1729.7L1495.4 1730.9L1496.1 1730.3L1496.8 1729.9L1497.5 1731.0L1498.2 1731.0L1499.0 1730.2L1499.7 1728.6L1500.4 1728.5L1501.1 1727.8L1501.8 1730.6L1502.6 1730.1L1503.3 1730.3L1504.0 1730.6L1504.7 1730.8L1505.5 1730.8L1506.2 1729.9L1506.9 1730.9L1507.6 1731.0L1508.3 1730.6L1509.1 1730.0L1509.8 1730.9L1510.5 1730.9L1511.2 1730.2L1511.9 1729.7L1512.7 1730.6L1513.4 1729.6L1514.1 1730.0L1514.8 1730.6L1515.5 1730.2L1516.3 1730.5L1517.0 1730.0L1517.7 1728.8L1518.4 1730.7L1519.2 1730.0L1519.9 1730.4L1520.6 1730.5L1521.3 1729.7L1522.0 1729.6L1522.8 1730.4L1523.5 1729.9L1524.2 1729.3L1524.9 1729.2L1525.6 1730.2L1526.4 1729.1L1527.1 1730.4L1527.8 1730.1L1528.5 1730.4L1529.2 1729.1L1530.0 1730.0L1530.7 1729.8L1531.4 1729.8L1532.1 1729.0L1532.9 1728.6L1533.6 1727.7L1534.3 1728.9L1535.0 1729.0L1535.7 1727.5L1536.5 1727.7L1537.2 1727.2L1537.9 1726.6L1538.6 1725.7L1539.3 1723.5L1540.1 1724.8L1540.8 1723.5L1541.5 1722.1L1542.2 1721.2L1542.9 1719.6L1543.7 1720.1L1544.4 1718.2L1545.1 1718.6L1545.8 1716.9L1546.6 1716.4L1547.3 1716.6L1548.0 1715.9L1548.7 1717.1L1549.4 1717.1L1550.2 1718.0L1550.9 1718.6L1551.6 1717.9L1552.3 1719.5L1553.0 1719.4L1553.8 1720.5L1554.5 1718.3L1555.2 1717.9L1555.9 1715.5L1556.6 1712.4L1557.4 1707.7L1558.1 1704.3L1558.8 1700.3L1559.5 1697.4L1560.3 1697.2L1561.0 1696.4L1561.7 1701.0L1562.4 1705.8L1563.1 1710.1L1563.9 1713.4L1564.6 1715.7L1565.3 1719.1L1566.0 1719.5L1566.7 1720.2L1567.5 1720.3L1568.2 1718.3L1568.9 1714.4L1569.6 1708.9L1570.3 1701.3L1571.1 1689.0L1571.8 1670.6L1572.5 1649.9L1573.2 1624.0L1574.0 1595.7L1574.7 1569.8L1575.4 1550.5L1576.1 1540.6L1576.8 1546.6L1577.6 1565.4L1578.3 1589.9L1579.0 1618.9L1579.7 1644.8L1580.4 1667.1L1581.2 1683.9L1581.9 1698.2L1582.6 1708.0L1583.3 1713.5L1584.0 1716.6L1584.8 1716.9L1585.5 1718.5L1586.2 1719.0L1586.9 1717.0L1587.7 1715.8L1588.4 1711.9L1589.1 1706.4L1589.8 1704.6L1590.5 1700.5L1591.3 1695.6L1592.0 1694.8L1592.7 1692.0L1593.4 1693.7L1594.1 1696.4L1594.9 1697.6L1595.6 1704.5L1596.3 1709.2L1597.0 1712.1L1597.7 1716.6L1598.5 1719.4L1599.2 1722.3L1599.9 1724.7L1600.6 1725.0L1601.4 1727.0L1602.1 1727.4L1602.8 1728.4L1603.5 1726.8L1604.2 1729.1L1605.0 1727.8L1605.7 1729.1L1606.4 1728.8L1607.1 1727.5L1607.8 1729.8L1608.6 1729.8L1609.3 1729.4L1610.0 1729.3L1610.7 1729.6L1611.4 1729.3L1612.2 1727.4L1612.9 1729.2L1613.6 1729.5L1614.3 1729.7L1615.1 1729.0L1615.8 1730.1L1616.5 1729.6L1617.2 1730.4L1617.9 1730.0L1618.7 1729.0L1619.4 1729.2L1620.1 1729.3L1620.8 1729.1L1621.5 1730.6L1622.3 1730.6L1623.0 1729.4L1623.7 1730.3L1624.4 1730.6L1625.1 1730.4L1625.9 1730.3L1626.6 1730.6L1627.3 1729.7L1628.0 1730.8L1628.7 1730.0L1629.5 1729.4L1630.2 1729.8L1630.9 1729.8L1631.6 1729.6L1632.4 1729.1L1633.1 1729.9L1633.8 1730.5L1634.5 1729.0L1635.2 1729.7L1636.0 1730.8L1636.7 1729.9L1637.4 1729.9L1638.1 1730.5L1638.8 1730.2L1639.6 1730.6L1640.3 1729.5L1641.0 1730.0L1641.7 1730.0L1642.4 1729.7L1643.2 1730.7L1643.9 1730.4L1644.6 1730.4L1645.3 1729.6L1646.1 1730.3L1646.8 1730.1L1647.5 1727.6L1648.2 1731.0L1648.9 1729.0L1649.7 1730.5L1650.4 1730.6L1651.1 1730.1L1651.8 1730.2L1652.5 1730.0L1653.3 1730.4L1654.0 1729.3L1654.7 1730.6L1655.4 1730.3L1656.1 1730.4L1656.9 1729.0L1657.6 1730.9L1658.3 1730.5L1659.0 1730.1L1659.8 1730.1L1660.5 1729.7L1661.2 1729.5L1661.9 1729.2L1662.6 1730.7L1663.4 1729.8L1664.1 1730.8L1664.8 1729.0L1665.5 1730.9L1666.2 1729.7L1667.0 1730.9L1667.7 1729.2L1668.4 1730.8L1669.1 1730.8L1669.8 1731.1L1670.6 1731.0L1671.3 1731.0L1672.0 1729.5L1672.7 1727.7L1673.5 1730.6L1674.2 1729.9L1674.9 1730.4L1675.6 1730.7L1676.3 1728.7L1677.1 1729.8L1677.8 1730.2L1678.5 1729.7L1679.2 1730.9L1679.9 1731.0L1680.7 1730.1L1681.4 1729.7L1682.1 1730.3L1682.8 1730.4L1683.5 1730.5L1684.3 1730.5L1685.0 1728.8L1685.7 1729.4L1686.4 1730.9L1687.2 1730.7L1687.9 1730.1L1688.6 1730.0L1689.3 1729.7L1690.0 1730.9L1690.8 1730.8L1691.5 1730.2L1692.2 1730.7L1692.9 1729.9L1693.6 1729.3L1694.4 1730.6L1695.1 1731.0L1695.8 1728.6L1696.5 1730.3L1697.2 1730.6L1698.0 1731.0L1698.7 1729.8L1699.4 1730.3L1700.1 1729.3L1700.9 1730.3L1701.6 1726.6L1702.3 1729.4L1703.0 1729.3L1703.7 1730.7L1704.5 1730.5L1705.2 1729.9L1705.9 1729.9L1706.6 1730.0L1707.3 1729.5L1708.1 1728.9L1708.8 1730.7L1709.5 1729.7L1710.2 1730.3L1710.9 1730.3L1711.7 1729.9L1712.4 1730.3L1713.1 1728.9L1713.8 1729.6L1714.6 1729.9L1715.3 1730.9L1716.0 1729.4L1716.7 1730.7L1717.4 1729.8L1718.2 1730.9L1718.9 1728.8L1719.6 1730.3L1720.3 1730.6L1721.0 1730.0L1721.8 1728.5L1722.5 1731.0L1723.2 1730.4L1723.9 1730.9L1724.6 1729.5L1725.4 1730.0L1726.1 1729.5L1726.8 1727.8L1727.5 1730.5L1728.3 1730.2L1729.0 1730.5L1729.7 1730.0L1730.4 1729.6L1731.1 1730.6L1731.9 1730.7L1732.6 1730.1L1733.3 1729.8L1734.0 1729.5L1734.7 1728.2L1735.5 1728.0L1736.2 1730.6L1736.9 1730.6L1737.6 1728.9L1738.3 1729.9L1739.1 1730.2L1739.8 1729.0L1740.5 1729.4L1741.2 1730.5L1742.0 1729.7L1742.7 1729.4L1743.4 1730.0L1744.1 1729.8L1744.8 1728.8L1745.6 1730.3L1746.3 1730.2L1747.0 1728.6L1747.7 1726.4L1748.4 1728.8L1749.2 1728.8L1749.9 1729.3L1750.6 1729.6L1751.3 1729.4L1752.0 1729.7L1752.8 1729.1L1753.5 1729.0L1754.2 1728.9L1754.9 1727.0L1755.7 1728.3L1756.4 1726.9L1757.1 1726.6L1757.8 1727.9L1758.5 1727.3L1759.3 1726.2L1760.0 1723.9L1760.7 1722.4L1761.4 1718.4L1762.1 1714.7L1762.9 1707.7L1763.6 1697.9L1764.3 1688.1L1765.0 1677.5L1765.7 1665.0L1766.5 1652.6L1767.2 1644.2L1767.9 1636.6L1768.6 1638.1L1769.4 1642.5L1770.1 1652.9L1770.8 1664.9L1771.5 1678.9L1772.2 1690.8L1773.0 1700.6L1773.7 1706.8L1774.4 1714.6L1775.1 1718.6L1775.8 1720.5L1776.6 1724.1L1777.3 1725.4L1778.0 1724.4L1778.7 1725.4L1779.4 1724.7L1780.2 1728.0L1780.9 1728.6L1781.6 1727.6L1782.3 1728.9L1783.0 1728.2L1783.8 1728.1L1784.5 1727.0L1785.2 1727.4L1785.9 1729.3L1786.7 1729.3L1787.4 1728.6L1788.1 1729.0L1788.8 1728.8L1789.5 1728.2L1790.3 1729.2L1791.0 1728.6L1791.7 1728.8L1792.4 1727.7L1793.1 1728.4L1793.9 1728.2L1794.6 1728.3L1795.3 1726.5L1796.0 1726.0L1796.7 1727.1L1797.5 1725.9L1798.2 1725.1L1798.9 1722.8L1799.6 1721.1L1800.4 1717.2L1801.1 1711.7L1801.8 1703.9L1802.5 1694.7L1803.2 1682.7L1804.0 1670.9L1804.7 1658.6L1805.4 1647.3L1806.1 1638.9L1806.8 1633.6L1807.6 1637.9L1808.3 1645.7L1809.0 1656.4L1809.7 1668.5L1810.4 1681.0L1811.2 1691.8L1811.9 1701.6L1812.6 1710.1L1813.3 1713.7L1814.1 1720.5L1814.8 1723.6L1815.5 1724.9L1816.2 1726.6L1816.9 1727.3L1817.7 1727.1L1818.4 1727.3L1819.1 1728.0L1819.8 1728.3L1820.5 1728.7L1821.3 1728.8L1822.0 1728.9L1822.7 1729.3L1823.4 1729.4L1824.1 1728.3L1824.9 1729.6L1825.6 1729.8L1826.3 1728.1L1827.0 1729.2L1827.8 1729.2L1828.5 1729.5L1829.2 1729.8L1829.9 1729.9L1830.6 1730.2L1831.4 1729.4L1832.1 1728.2L1832.8 1730.1L1833.5 1729.0L1834.2 1729.1L1835.0 1729.4L1835.7 1729.9L1836.4 1729.7L1837.1 1730.7L1837.8 1730.3L1838.6 1730.5L1839.3 1729.9L1840.0 1729.2L1840.7 1729.1L1841.5 1730.7L1842.2 1729.5L1842.9 1728.7L1843.6 1729.9L1844.3 1729.0L1845.1 1729.3L1845.8 1730.2L1846.5 1729.9L1847.2 1728.7L1847.9 1729.9L1848.7 1730.0L1849.4 1729.3L1850.1 1728.5L1850.8 1729.2L1851.5 1729.4L1852.3 1728.2L1853.0 1728.1L1853.7 1727.1L1854.4 1726.7L1855.2 1726.0L1855.9 1724.1L1856.6 1723.4L1857.3 1725.2L1858.0 1723.3L1858.8 1725.5L1859.5 1725.9L1860.2 1726.2L1860.9 1726.5L1861.6 1727.7L1862.4 1727.4L1863.1 1727.9L1863.8 1729.1L1864.5 1729.4L1865.2 1729.5L1866.0 1729.5L1866.7 1729.2L1867.4 1730.1L1868.1 1729.6L1868.9 1728.7L1869.6 1730.1L1870.3 1730.5L1871.0 1730.5L1871.7 1729.4L1872.5 1728.7L1873.2 1730.0L1873.9 1729.9L1874.6 1728.9L1875.3 1728.6L1876.1 1728.7L1876.8 1728.6L1877.5 1726.6L1878.2 1726.0L1878.9 1725.8L1879.7 1722.9L1880.4 1724.2L1881.1 1722.9L1881.8 1721.7L1882.6 1719.7L1883.3 1719.6L1884.0 1716.6L1884.7 1718.1L1885.4 1718.0L1886.2 1717.4L1886.9 1719.2L1887.6 1718.7L1888.3 1721.0L1889.0 1722.6L1889.8 1721.7L1890.5 1723.9L1891.2 1725.1L1891.9 1725.6L1892.6 1727.1L1893.4 1727.5L1894.1 1728.7L1894.8 1728.9L1895.5 1729.6L1896.3 1730.0L1897.0 1729.7L1897.7 1729.3L1898.4 1727.7L1899.1 1729.4L1899.9 1728.2L1900.6 1727.5L1901.3 1729.2L1902.0 1728.1L1902.7 1728.3L1903.5 1727.4L1904.2 1727.6L1904.9 1727.3L1905.6 1727.5L1906.3 1727.6L1907.1 1727.3L1907.8 1727.7L1908.5 1726.5L1909.2 1728.4L1910.0 1728.1L1910.7 1728.1L1911.4 1729.3L1912.1 1728.8L1912.8 1729.8L1913.6 1729.5L1914.3 1728.1L1915.0 1729.3L1915.7 1729.3L1916.4 1729.9L1917.2 1729.0L1917.9 1729.2L1918.6 1730.1L1919.3 1730.2L1920.0 1729.3L1920.8 1730.1L1921.5 1730.1L1922.2 1730.9L1922.9 1728.7L1923.7 1730.6L1924.4 1730.3L1925.1 1730.6L1925.8 1730.5L1926.5 1730.1L1927.3 1730.6L1928.0 1730.4L1928.7 1729.1L1929.4 1730.8L1930.1 1731.0L1930.9 1730.5L1931.6 1729.9L1932.3 1730.8L1933.0 1730.6L1933.7 1730.9L1934.5 1731.0L1935.2 1729.0L1935.9 1730.9L1936.6 1729.4L1937.3 1729.9L1938.1 1729.3L1938.8 1731.1L1939.5 1730.0L1940.2 1730.0L1941.0 1730.6L1941.7 1730.9L1942.4 1731.0L1943.1 1731.1L1943.8 1729.6L1944.6 1730.5L1945.3 1729.0L1946.0 1728.7L1946.7 1730.2L1947.4 1730.2L1948.2 1731.0L1948.9 1730.5L1949.6 1728.9L1950.3 1730.4L1951.0 1730.5L1951.8 1730.4L1952.5 1730.6L1953.2 1729.4L1953.9 1729.3L1954.7 1729.1L1955.4 1730.4L1956.1 1729.1L1956.8 1729.8L1957.5 1729.5L1958.3 1730.5L1959.0 1730.5L1959.7 1730.5L1960.4 1730.2L1961.1 1729.9L1961.9 1730.1L1962.6 1729.6L1963.3 1729.6L1964.0 1730.8L1964.7 1730.7L1965.5 1729.5L1966.2 1730.1L1966.9 1730.4L1967.6 1729.4L1968.4 1728.8L1969.1 1729.7L1969.8 1729.4L1970.5 1730.8L1971.2 1730.5L1972.0 1730.0L1972.7 1730.7L1973.4 1730.7L1974.1 1730.6L1974.8 1730.2L1975.6 1727.7L1976.3 1730.2L1977.0 1730.5L1977.7 1730.6L1978.4 1730.1L1979.2 1730.5L1979.9 1730.6L1980.6 1730.5L1981.3 1729.1L1982.1 1728.4L1982.8 1730.0L1983.5 1728.5L1984.2 1728.9L1984.9 1727.4L1985.7 1727.7L1986.4 1728.0L1987.1 1727.0L1987.8 1726.2L1988.5 1725.7L1989.3 1723.9L1990.0 1725.3L1990.7 1724.7L1991.4 1724.3L1992.1 1723.2L1992.9 1723.4L1993.6 1723.7L1994.3 1724.2L1995.0 1724.0L1995.8 1724.1L1996.5 1723.7L1997.2 1722.1L1997.9 1725.0L1998.6 1722.9L1999.4 1723.0L2000.1 1723.8L2000.8 1725.0L2001.5 1725.1L2002.2 1724.9L2003.0 1724.7L2003.7 1724.2L2004.4 1725.4L2005.1 1725.1L2005.8 1725.4L2006.6 1727.1L2007.3 1726.9L2008.0 1726.8L2008.7 1726.3L2009.5 1725.9L2010.2 1726.6L2010.9 1727.2L2011.6 1726.6L2012.3 1725.5L2013.1 1725.0L2013.8 1724.9L2014.5 1724.8L2015.2 1724.6L2015.9 1724.5L2016.7 1725.2L2017.4 1725.0L2018.1 1725.8L2018.8 1726.5L2019.5 1726.9L2020.3 1726.7L2021.0 1727.6L2021.7 1727.1L2022.4 1727.3L2023.2 1729.2L2023.9 1729.1L2024.6 1729.0L2025.3 1729.7L2026.0 1728.5L2026.8 1730.0L2027.5 1729.9L2028.2 1728.5L2028.9 1728.7L2029.6 1728.8L2030.4 1729.5L2031.1 1729.2L2031.8 1728.5L2032.5 1728.1L2033.2 1725.0L2034.0 1725.3L2034.7 1722.3L2035.4 1721.1L2036.1 1719.7L2036.9 1717.1L2037.6 1714.4L2038.3 1715.5L2039.0 1714.3L2039.7 1715.9L2040.5 1719.1L2041.2 1721.1L2041.9 1721.8L2042.6 1724.9L2043.3 1726.2L2044.1 1726.5L2044.8 1727.6L2045.5 1727.3L2046.2 1727.6L2046.9 1726.0L2047.7 1724.6L2048.4 1724.9L2049.1 1723.3L2049.8 1720.3L2050.6 1718.0L2051.3 1712.9L2052.0 1708.2L2052.7 1702.5L2053.4 1696.0L2054.2 1689.0L2054.9 1681.2L2055.6 1676.2L2056.3 1671.8L2057.0 1668.5L2057.8 1669.9L2058.5 1672.1L2059.2 1678.0L2059.9 1682.9L2060.6 1691.5L2061.4 1698.0L2062.1 1705.2L2062.8 1707.9L2063.5 1715.1L2064.3 1719.0L2065.0 1721.8L2065.7 1724.1L2066.4 1723.9L2067.1 1726.2L2067.9 1726.0L2068.6 1726.4L2069.3 1728.8L2070.0 1728.4L2070.7 1729.1L2071.5 1728.3L2072.2 1728.7L2072.9 1728.7L2073.6 1730.0L2074.3 1729.9L2075.1 1728.4L2075.8 1728.6L2076.5 1729.4L2077.2 1728.8L2078.0 1730.2L2078.7 1728.7L2079.4 1730.3L2080.1 1730.1L2080.8 1729.4L2081.6 1729.7L2082.3 1729.7L2083.0 1728.4L2083.7 1730.6L2084.4 1730.7L2085.2 1730.4L2085.9 1730.2L2086.6 1728.3L2087.3 1730.4L2088.0 1730.8L2088.8 1730.5L2089.5 1729.9L2090.2 1728.6L2090.9 1730.7L2091.6 1729.7L2092.4 1730.0L2093.1 1730.9L2093.8 1730.2L2094.5 1730.0L2095.3 1729.9L2096.0 1729.8L2096.7 1730.1L2097.4 1730.3L2098.1 1730.3L2098.9 1728.2L2099.6 1730.8L2100.3 1730.7L2101.0 1730.4L2101.7 1729.8L2102.5 1729.5L2103.2 1730.8L2103.9 1730.0L2104.6 1730.3L2105.3 1729.1L2106.1 1730.5L2106.8 1730.8L2107.5 1730.6L2108.2 1727.2L2109.0 1730.3L2109.7 1729.9L2110.4 1730.3L2111.1 1730.0L2111.8 1729.4L2112.6 1729.8L2113.3 1728.5L2114.0 1729.5L2114.7 1727.6L2115.4 1726.0L2116.2 1727.3L2116.9 1727.6L2117.6 1727.2L2118.3 1724.6L2119.0 1724.8L2119.8 1723.9L2120.5 1723.3L2121.2 1722.8L2121.9 1722.3L2122.7 1722.7L2123.4 1722.9L2124.1 1722.9L2124.8 1721.7L2125.5 1723.0L2126.3 1724.5L2127.0 1724.8L2127.7 1724.4L2128.4 1726.7L2129.1 1726.0L2129.9 1727.1L2130.6 1727.6L2131.3 1727.7L2132.0 1728.8L2132.7 1728.8L2133.5 1729.4L2134.2 1728.6L2134.9 1727.2L2135.6 1729.7L2136.4 1730.5L2137.1 1730.6L2137.8 1729.7L2138.5 1730.4L2139.2 1730.1L2140.0 1728.0L2140.7 1730.1L2141.4 1729.3L2142.1 1730.2L2142.8 1729.3L2143.6 1729.5L2144.3 1729.7L2145.0 1729.2L2145.7 1729.0L2146.4 1728.0L2147.2 1728.5L2147.9 1726.6L2148.6 1727.0L2149.3 1727.1L2150.1 1725.6L2150.8 1726.1L2151.5 1725.9L2152.2 1725.9L2152.9 1723.2L2153.7 1724.2L2154.4 1725.0L2155.1 1725.5L2155.8 1725.3L2156.5 1726.9L2157.3 1726.7L2158.0 1727.7L2158.7 1728.0L2159.4 1728.8L2160.1 1729.5L2160.9 1729.6L2161.6 1729.6L2162.3 1729.4L2163.0 1730.4L2163.8 1729.8L2164.5 1729.9L2165.2 1730.4L2165.9 1728.9L2166.6 1729.1L2167.4 1730.2L2168.1 1730.2L2168.8 1730.6L2169.5 1727.8L2170.2 1730.2L2171.0 1730.6L2171.7 1730.2L2172.4 1728.8L2173.1 1730.4L2173.8 1730.6L2174.6 1730.5L2175.3 1729.6L2176.0 1729.6L2176.7 1730.1L2177.5 1730.5L2178.2 1730.8L2178.9 1730.1L2179.6 1729.5L2180.3 1730.7L2181.1 1730.1L2181.8 1730.5L2182.5 1730.0L2183.2 1730.1L2183.9 1730.6L2184.7 1729.4L2185.4 1730.4L2186.1 1730.5L2186.8 1730.0L2187.5 1730.6L2188.3 1730.5L2189.0 1730.9L2189.7 1731.2L2190.4 1729.7L2191.2 1730.7L2191.9 1730.8L2192.6 1731.2L2193.3 1729.7L2194.0 1729.6L2194.8 1730.7L2195.5 1730.8L2196.2 1730.7L2196.9 1730.5L2197.6 1731.0L2198.4 1730.7L2199.1 1730.8L2199.8 1730.0L2200.5 1729.4L2201.2 1730.5L2202.0 1729.4L2202.7 1730.3L2203.4 1730.2L2204.1 1730.4L2204.9 1731.0L2205.6 1730.2L2206.3 1730.5L2207.0 1729.0L2207.7 1731.0L2208.5 1730.1L2209.2 1730.9L2209.9 1727.8L2210.6 1729.7L2211.3 1731.1L2212.1 1728.2L2212.8 1730.3L2213.5 1731.2L2214.2 1731.1L2214.9 1729.4L2215.7 1731.2L2216.4 1731.0L2217.1 1730.0L2217.8 1730.4L2218.6 1731.1L2219.3 1731.1L2220.0 1730.6L2220.7 1730.6L2221.4 1730.9L2222.2 1729.7L2222.9 1730.4L2223.6 1730.5L2224.3 1730.8L2225.0 1730.1L2225.8 1730.8L2226.5 1730.7L2227.2 1730.4L2227.9 1731.0L2228.6 1728.2L2229.4 1730.8L2230.1 1730.8L2230.8 1730.9L2231.5 1730.1L2232.3 1729.7L2233.0 1731.0L2233.7 1730.2L2234.4 1730.0L2235.1 1730.7L2235.9 1729.7L2236.6 1729.5L2237.3 1728.7L2238.0 1728.9L2238.7 1729.2L2239.5 1728.9L2240.2 1729.7L2240.9 1728.8L2241.6 1729.4L2242.3 1728.8L2243.1 1729.5L2243.8 1728.0L2244.5 1728.8L2245.2 1727.8L2245.9 1728.9L2246.7 1728.5L2247.4 1726.9L2248.1 1726.8L2248.8 1724.2L2249.6 1723.7L2250.3 1721.3L2251.0 1719.9L2251.7 1716.3L2252.4 1714.4L2253.2 1710.3L2253.9 1711.4L2254.6 1709.5L2255.3 1709.3L2256.0 1709.1L2256.8 1711.5L2257.5 1713.7L2258.2 1716.2L2258.9 1716.0L2259.6 1719.9L2260.4 1721.4L2261.1 1721.7L2261.8 1725.5L2262.5 1725.8L2263.3 1725.9L2264.0 1727.5L2264.7 1727.9L2265.4 1726.6L2266.1 1727.6L2266.9 1728.8L2267.6 1726.6L2268.3 1728.1L2269.0 1727.5L2269.7 1728.2L2270.5 1728.4L2271.2 1726.3L2271.9 1726.3L2272.6 1728.6L2273.3 1729.1L2274.1 1726.8L2274.8 1727.1L2275.5 1726.7L2276.2 1729.4L2277.0 1729.0L2277.7 1728.6L2278.4 1729.6L2279.1 1730.1L2279.8 1730.6L2280.6 1730.3L2281.3 1729.3L2282.0 1728.8L2282.7 1730.8L2283.4 1728.5L2284.2 1731.0L2284.9 1731.0L2285.6 1730.9L2286.3 1728.9L2287.0 1730.9L2287.8 1730.8L2288.5 1730.2L2289.2 1731.0L2289.9 1730.6L2290.7 1731.0L2291.4 1727.3L2292.1 1730.1L2292.8 1730.3L2293.5 1729.0L2294.3 1729.8L2295.0 1730.0L2295.7 1730.1L2296.4 1730.0L2297.1 1730.2L2297.9 1729.3L2298.6 1729.7L2299.3 1729.3" stroke="#fb4b4f" stroke-width="3.6"/>
</g>
<path d="M168.4 1733.2V977H2299.2V1733.2" stroke="#a8a8a8" stroke-width="2" fill="none"/>
<path d="M167.4 1733.4H2300.2" stroke="#a4a4a4" stroke-width="2.4" fill="none"/>
<rect x="168.4" y="1746" width="2130.7999999999997" height="91.70000000000005" stroke="#9c9c9c" stroke-width="2.2" fill="none"/>
<path d="M383.5 1746.5V1768.5M681.1 1746.5V1768.5M758.8 1746.5V1768.5M831.9 1746.5V1768.5M966.9 1746.5V1768.5M1015.4 1746.5V1768.5M1181.6 1746.5V1768.5M1213.4 1746.5V1768.5M1240.9 1746.5V1768.5M1267.1 1746.5V1768.5M1295.3 1746.5V1768.5M1418.2 1746.5V1768.5M1560.1 1746.5V1768.5M1576.2 1746.5V1768.5M1592.9 1746.5V1768.5M1768.2 1746.5V1768.5M1806.9 1746.5V1768.5M1885.2 1746.5V1768.5M2038.3 1746.5V1768.5M2057.3 1746.5V1768.5M2255.3 1746.5V1768.5" stroke="#fb4b4f" stroke-width="4.4" fill="none"/>
<path d="M758.8 1767V1791.5M966.9 1767V1791.5M1032.8 1767V1791.5M1181.6 1767V1791.5M1295.3 1767V1791.5M1418.2 1767V1791.5M1548.0 1767V1791.5M1560.1 1767V1791.5M1592.9 1767V1791.5M1857.7 1767V1791.5M1885.2 1767V1791.5M1906.2 1767V1791.5M1992.7 1767V1791.5M2002.6 1767V1791.5M2014.7 1767V1791.5M2070.7 1767V1791.5M2123.2 1767V1791.5M2152.7 1767V1791.5M2271.0 1767V1791.5" stroke="#6a6aff" stroke-width="4.4" fill="none"/>
<path d="M831.9 1790V1814M1213.4 1790V1814M1240.9 1790V1814M1267.1 1790V1814M1576.2 1790V1814M1705.3 1790V1814M1768.2 1790V1814M1806.9 1790V1814M2038.3 1790V1814M2057.3 1790V1814M2255.3 1790V1814" stroke="#18b418" stroke-width="4.4" fill="none"/>
<path d="M758.8 1812.5V1836.5M966.9 1812.5V1836.5M1032.8 1812.5V1836.5M1181.6 1812.5V1836.5M1295.3 1812.5V1836.5M1418.2 1812.5V1836.5M1548.0 1812.5V1836.5M1560.1 1812.5V1836.5M1592.9 1812.5V1836.5M1857.7 1812.5V1836.5M1885.2 1812.5V1836.5M1906.2 1812.5V1836.5M1992.7 1812.5V1836.5M2002.6 1812.5V1836.5M2014.7 1812.5V1836.5M2070.7 1812.5V1836.5M2123.2 1812.5V1836.5M2152.7 1812.5V1836.5M2271.0 1812.5V1836.5" stroke="#ff55ff" stroke-width="4.4" fill="none"/>
<circle cx="1777.3" cy="1055.8" r="63.4" fill="#40cc40" stroke="#a8b8a8" stroke-width="1"/>
<path d="M1777.3 1055.8V992.4A63.4 63.4 0 0 1 1838.7 1071.6Z" fill="#8282fa"/>
<path d="M1865.8 1003.8H1903.8" stroke="#ff6a6a" stroke-width="4"/>
<path d="M1865.8 1052.6H1903.8" stroke="#7474ff" stroke-width="4"/>
<path d="M1865.8 1100.7H1903.8" stroke="#2cc82c" stroke-width="4"/>
<path d="M1865.8 1149.2H1903.8" stroke="#ff66ff" stroke-width="4"/>
<path d="M2351 1426L2326 1447.3L2351 1468.5" fill="none" stroke="#1767c6" stroke-width="11" stroke-linejoin="miter"/>
<path d="M2352.5 1430.5L2333 1447.3" fill="none" stroke="#1f7ce0" stroke-width="4"/><path d="M2338 1455.5L2352.5 1468" fill="none" stroke="#1c7ade" stroke-width="5"/>
</svg>
<div class="a" style="left:259.6px;top:1067.5px;width:439.4px;height:352.2px;background:#f0f0f0;border:2.2px solid #5e5e60;box-sizing:border-box;box-shadow:0 5px 26px 5px rgba(0,0,0,.31);"></div>
<div class="a" style="left:261.8px;top:1069.7px;width:435.0px;height:73.3px;background:#fff;"></div>
<svg class="a" style="left:280.4px;top:1083.2px" width="40" height="40" viewBox="0 0 40 40">
<circle cx="20" cy="20" r="19.4" fill="#224a8a"/>
<path d="M10 12.5L13 9h15l-2.5 3.5zM25.5 12.5L28 9v15.5l-2.5 4z" fill="#4f94d8" stroke="#a4b4e6" stroke-width="1.6" stroke-linejoin="round"/>
<rect x="9.6" y="12.5" width="16" height="16" fill="#3f82c4" stroke="#a4b4e6" stroke-width="1.8"/>
<rect x="13.6" y="15.4" width="2.2" height="4.6" rx="1" fill="#7ee83a"/><rect x="21" y="16.6" width="3.6" height="7" rx="1" fill="#8ee84a"/><rect x="15" y="22.4" width="2.2" height="2.2" fill="#7ed84a"/><rect x="18" y="17.6" width="2.4" height="1.6" fill="#1f78e0"/>
</svg>
<svg class="a" style="left:646px;top:1089px" width="30" height="30"><path d="M3 3L27 27M27 3L3 27" stroke="#000" stroke-width="2.4" fill="none"/></svg>
<div class="a" style="left:518.0px;top:1208.0px;width:159.3px;height:47.4px;background:#fff;border:2px solid #7a7a7a;box-sizing:border-box;"></div>
<svg class="a" style="left:641px;top:1228px" width="26" height="17"><path d="M2.6 3L12.6 13L22.6 3" fill="none" stroke="#333" stroke-width="2.4"/></svg>
<div class="a" style="left:578.6px;top:1215.0px;width:2.0px;height:34.0px;background:#000;"></div>
<div class="a" style="left:275.8px;top:1272.3px;width:32px;height:32px;border-radius:50%;background:#fff;border:2.2px solid #333;box-sizing:border-box;"></div>
<div class="a" style="left:283.8px;top:1280.3px;width:16px;height:16px;border-radius:50%;background:#333;"></div>
<div class="a" style="left:461.9px;top:1272.3px;width:32px;height:32px;border-radius:50%;background:#fff;border:2.2px solid #333;box-sizing:border-box;"></div>
<div class="a" style="left:266.6px;top:1324.0px;width:425.4px;height:2.0px;background:#828385;"></div>
<div class="a" style="left:266.6px;top:1326.0px;width:425.4px;height:2.0px;background:#fff;"></div>
<div class="a" style="left:303.0px;top:1345.4px;width:205.3px;height:50.6px;background:#e5f1fb;border:2.6px solid #0078d7;box-sizing:border-box;"></div>
<div class="a" style="left:523.0px;top:1345.4px;width:152.0px;height:50.6px;background:#e1e1e1;border:2px solid #adadad;box-sizing:border-box;"></div>
<span class="t" style="left:55.35px;top:14.43px;font-size:29.5px;line-height:29.5px;color:#000;transform:scaleX(0.9482);">SIeve+ - ChineseWhite.raw</span>
<span class="t" style="left:22.35px;top:69.67px;font-size:28.5px;line-height:28.5px;color:#000;transform:scaleX(1.0262);">File</span>
<span class="t" style="left:1927.26px;top:70.47px;font-size:28.5px;line-height:28.5px;color:#6e6e6e;transform:scaleX(0.9723);">Radiation: X-ray (Cu Kα1 1.5406 Å)</span>
<span class="t" style="left:76.50px;top:133.57px;font-size:28.5px;line-height:28.5px;color:#000;transform:scaleX(0.9325);"><span style="font-family:'Liberation Mono';font-size:0.97em;margin-left:-0.09em;letter-spacing:-0.09em">I</span>mport 1D Diffraction Pattern</span>
<span class="t" style="left:76.50px;top:193.47px;font-size:28.5px;line-height:28.5px;color:#000;transform:scaleX(0.9325);"><span style="font-family:'Liberation Mono';font-size:0.97em;margin-left:-0.09em;letter-spacing:-0.09em">I</span>mport 2D Diffraction Pattern</span>
<span class="t" style="left:74.17px;top:253.67px;font-size:28.5px;line-height:28.5px;color:#000;transform:scaleX(0.9158);">New d-<span style="font-family:'Liberation Mono';font-size:0.97em;margin-left:-0.09em;letter-spacing:-0.09em">I</span> List</span>
<span class="t" style="left:206.32px;top:304.73px;font-size:23px;line-height:23px;color:#000;transform:scaleX(0.9839);">File</span>
<span class="t" style="left:502.60px;top:133.57px;font-size:28.5px;line-height:28.5px;color:#000;transform:scaleX(0.8954);">Accept Phase</span>
<span class="t" style="left:500.82px;top:193.47px;font-size:28.5px;line-height:28.5px;color:#000;transform:scaleX(0.8909);">Remove Last Phase</span>
<span class="t" style="left:501.70px;top:253.67px;font-size:28.5px;line-height:28.5px;color:#000;transform:scaleX(0.8982);">Complete Phases (2)</span>
<span class="t" style="left:565.90px;top:304.73px;font-size:23px;line-height:23px;color:#000;transform:scaleX(1.0549);">Action</span>
<span class="t" style="left:782.08px;top:137.87px;font-size:28.5px;line-height:28.5px;color:#000;transform:scaleX(0.9154);">Search method:</span>
<span class="t" style="left:782.07px;top:196.27px;font-size:28.5px;line-height:28.5px;color:#000;transform:scaleX(0.9334);">Search window (°):</span>
<span class="t" style="left:781.11px;top:254.47px;font-size:28.5px;line-height:28.5px;color:#000;transform:scaleX(0.9467);">Match window (°):</span>
<span class="t" style="left:1251.20px;top:133.57px;font-size:28.5px;line-height:28.5px;color:#000;transform:scaleX(0.9051);">Weight d-spacings</span>
<span class="t" style="left:1250.29px;top:193.47px;font-size:28.5px;line-height:28.5px;color:#000;transform:scaleX(0.9144);">2nd pass filter</span>
<span class="t" style="left:1206.97px;top:254.47px;font-size:28.5px;line-height:28.5px;color:#000;transform:scaleX(0.8672);">Min GOM:</span>
<span class="t" style="left:1268.17px;top:304.73px;font-size:23px;line-height:23px;color:#000;transform:scaleX(1.0298);">Matches (4 of 46,923)</span>
<span class="t" style="left:1543.80px;top:133.57px;font-size:28.5px;line-height:28.5px;color:#000;transform:scaleX(0.9046);">Set Filter</span>
<span class="t" style="left:1504.99px;top:191.17px;font-size:28.5px;line-height:28.5px;color:#000;transform:scaleX(0.9074);">Subfile (Mineral Related) and [Exclude</span>
<span class="t" style="left:1504.94px;top:224.87px;font-size:28.5px;line-height:28.5px;color:#000;transform:scaleX(0.9577);">deleted/hypothetical patterns]</span>
<span class="t" style="left:2067.00px;top:155.17px;font-size:28.5px;line-height:28.5px;color:#000;transform:scaleX(0.8863);"><span style="font-family:'Liberation Mono';font-size:0.97em;margin-left:-0.09em;letter-spacing:-0.09em">I</span>nsert PDF</span>
<span class="t" style="left:2066.08px;top:239.67px;font-size:28.5px;line-height:28.5px;color:#000;transform:scaleX(0.9245);">Create Graph</span>
<span class="t" style="left:2093.30px;top:305.03px;font-size:23px;line-height:23px;color:#000;transform:scaleX(1.0647);">Table</span>
<div class="a" style="left:2300px;top:0;width:83px;height:1952px;overflow:hidden;"><span class="t" style="left:9.00px;top:155.17px;font-size:28.5px;line-height:28.5px;color:#000;transform:scaleX(1.0000);"><span style="font-family:'Liberation Mono';font-size:0.97em;margin-left:-0.09em;letter-spacing:-0.09em">I</span>ntern</span></div>
<div class="a" style="left:2300px;top:0;width:83px;height:1952px;overflow:hidden;"><span class="t" style="left:9.00px;top:239.67px;font-size:28.5px;line-height:28.5px;color:#000;transform:scaleX(0.9185);"><span style="font-family:'Liberation Mono';font-size:0.97em;margin-left:-0.09em;letter-spacing:-0.09em">I</span>ntens</span></div>
<div class="a" style="left:2300px;top:0;width:83px;height:1952px;overflow:hidden;"><span class="t" style="left:31.23px;top:305.03px;font-size:23px;line-height:23px;color:#000;transform:scaleX(1.1711);">Corr</span></div>
<span class="t" style="left:1022.82px;top:138.27px;font-size:28.5px;line-height:28.5px;color:#000;transform:scaleX(0.9393);">Hanawalt</span>
<span class="t" style="left:1022.01px;top:196.27px;font-size:28.5px;line-height:28.5px;color:#000;transform:scaleX(0.9885);">0.15</span>
<span class="t" style="left:1022.01px;top:254.47px;font-size:28.5px;line-height:28.5px;color:#000;transform:scaleX(0.9885);">0.15</span>
<span class="t" style="left:1338.11px;top:254.47px;font-size:28.5px;line-height:28.5px;color:#000;transform:scaleX(0.8903);">2000</span>
<span class="t" style="left:40.17px;top:396.87px;font-size:28.5px;line-height:28.5px;color:#000;transform:scaleX(0.8265);">GOM</span>
<span class="t" style="left:161.61px;top:396.87px;font-size:28.5px;line-height:28.5px;color:#000;transform:scaleX(0.8957);">Peaks Matched</span>
<span class="t" style="left:370.60px;top:396.87px;font-size:28.5px;line-height:28.5px;color:#000;transform:scaleX(0.8965);">QM</span>
<span class="t" style="left:462.53px;top:396.87px;font-size:28.5px;line-height:28.5px;color:#000;transform:scaleX(0.8703);">Chemical Formula</span>
<span class="t" style="left:897.62px;top:396.87px;font-size:28.5px;line-height:28.5px;color:#000;transform:scaleX(0.8821);">Compound Name</span>
<span class="t" style="left:1332.24px;top:396.87px;font-size:28.5px;line-height:28.5px;color:#000;transform:scaleX(0.8823);">Mineral Name</span>
<span class="t" style="left:1767.61px;top:396.87px;font-size:28.5px;line-height:28.5px;color:#000;transform:scaleX(0.8928);">Phase</span>
<span class="t" style="left:1897.10px;top:396.87px;font-size:28.5px;line-height:28.5px;color:#000;transform:scaleX(0.9048);">Coords</span>
<span class="t" style="left:2038.62px;top:399.53px;font-size:28px;line-height:28px;color:#000;transform:scaleX(0.6923);font-family:'Liberation Mono';">I</span>
<span class="t" style="left:2050.00px;top:396.87px;font-size:28.5px;line-height:28.5px;color:#000;transform:scaleX(1.3750);">/</span>
<span class="t" style="left:2059.62px;top:399.53px;font-size:28px;line-height:28px;color:#000;transform:scaleX(0.6923);font-family:'Liberation Mono';">I</span>
<span class="t" style="left:2070.15px;top:396.87px;font-size:28.5px;line-height:28.5px;color:#000;transform:scaleX(0.8462);">c</span>
<span class="t" style="left:2140.97px;top:396.87px;font-size:28.5px;line-height:28.5px;color:#000;transform:scaleX(0.9174);">PDF #</span>
<div class="a" style="left:2270px;top:0;width:111px;height:1952px;overflow:hidden;"><span class="t" style="left:48.44px;top:396.87px;font-size:28.5px;line-height:28.5px;color:#000;transform:scaleX(0.9300);">D1 (Å)</span></div>
<span class="t" style="left:47.88px;top:442.67px;font-size:28.5px;line-height:28.5px;color:#00d200;transform:scaleX(0.9212);">3625</span>
<span class="t" style="left:170.04px;top:442.67px;font-size:28.5px;line-height:28.5px;color:#fff;transform:scaleX(0.9612);">8 of 18</span>
<span class="t" style="left:269.64px;top:446.48px;font-size:24px;line-height:24px;color:#fff;transform:scaleX(1.0592);font-style:italic;">(44%)</span>
<span class="t" style="left:413.48px;top:442.67px;font-size:28.5px;line-height:28.5px;color:#fff;transform:scaleX(0.9176);">S</span>
<span class="t" style="left:459.01px;top:440.66px;font-size:24.5px;line-height:24.5px;color:#fff;transform:scaleX(0.9859);">Ca C O</span>
<span class="t" style="left:542.00px;top:455.85px;font-size:20.5px;line-height:20.5px;color:#fff;transform:scaleX(1.1727);">3</span>
<span class="t" style="left:893.41px;top:442.67px;font-size:28.5px;line-height:28.5px;color:#fff;transform:scaleX(0.8943);">Calcium Carbonate</span>
<span class="t" style="left:1328.77px;top:442.67px;font-size:28.5px;line-height:28.5px;color:#fff;transform:scaleX(0.9297);">Calcite, syn</span>
<span class="t" style="left:2046.62px;top:442.67px;font-size:28.5px;line-height:28.5px;color:#fff;transform:scaleX(0.9797);">2.0</span>
<span class="t" style="left:2103.36px;top:442.67px;font-size:28.5px;line-height:28.5px;color:#fff;transform:scaleX(0.9350);">00-005-0586</span>
<div class="a" style="left:2270px;top:0;width:111px;height:1952px;overflow:hidden;"><span class="t" style="left:47.01px;top:442.67px;font-size:28.5px;line-height:28.5px;color:#a4a4ff;transform:scaleX(0.9932);">3.035</span></div>
<span class="t" style="left:47.85px;top:486.17px;font-size:28.5px;line-height:28.5px;color:#1fc61f;transform:scaleX(0.9540);">3411</span>
<span class="t" style="left:170.04px;top:486.17px;font-size:28.5px;line-height:28.5px;color:#000;transform:scaleX(0.9612);">8 of 18</span>
<span class="t" style="left:269.64px;top:489.98px;font-size:24px;line-height:24px;color:#000;transform:scaleX(1.0592);font-style:italic;">(44%)</span>
<span class="t" style="left:413.51px;top:486.17px;font-size:28.5px;line-height:28.5px;color:#000;transform:scaleX(0.8895);">C</span>
<span class="t" style="left:459.01px;top:484.16px;font-size:24.5px;line-height:24.5px;color:#000;transform:scaleX(0.9859);">Ca C O</span>
<span class="t" style="left:542.00px;top:499.35px;font-size:20.5px;line-height:20.5px;color:#000;transform:scaleX(1.1727);">3</span>
<span class="t" style="left:893.41px;top:486.17px;font-size:28.5px;line-height:28.5px;color:#000;transform:scaleX(0.8943);">Calcium Carbonate</span>
<span class="t" style="left:1328.81px;top:486.17px;font-size:28.5px;line-height:28.5px;color:#000;transform:scaleX(0.8949);">Calcite</span>
<span class="t" style="left:2031.63px;top:486.17px;font-size:28.5px;line-height:28.5px;color:#8c8c8c;transform:scaleX(0.9698);">3.23</span>
<span class="t" style="left:2103.36px;top:486.17px;font-size:28.5px;line-height:28.5px;color:#000;transform:scaleX(0.9350);">00-047-1743</span>
<div class="a" style="left:2270px;top:0;width:111px;height:1952px;overflow:hidden;"><span class="t" style="left:17.74px;top:486.17px;font-size:28.5px;line-height:28.5px;color:#4a4aff;transform:scaleX(0.9621);">3.03554</span></div>
<span class="t" style="left:47.85px;top:529.67px;font-size:28.5px;line-height:28.5px;color:#1fc61f;transform:scaleX(0.9540);">2511</span>
<span class="t" style="left:178.34px;top:529.67px;font-size:28.5px;line-height:28.5px;color:#000;transform:scaleX(0.9603);">2 of 3</span>
<span class="t" style="left:262.68px;top:533.48px;font-size:24px;line-height:24px;color:#000;transform:scaleX(1.0205);font-style:italic;">(67%)</span>
<span class="t" style="left:413.48px;top:529.67px;font-size:28.5px;line-height:28.5px;color:#000;transform:scaleX(0.9176);">S</span>
<span class="t" style="left:458.02px;top:527.66px;font-size:24.5px;line-height:24.5px;color:#000;transform:scaleX(0.9898);">Fe</span>
<span class="t" style="left:490.40px;top:542.85px;font-size:20.5px;line-height:20.5px;color:#000;transform:scaleX(1.0380);">0.30</span>
<span class="t" style="left:537.66px;top:527.66px;font-size:24.5px;line-height:24.5px;color:#000;transform:scaleX(0.9679);">Mg</span>
<span class="t" style="left:574.80px;top:542.85px;font-size:20.5px;line-height:20.5px;color:#000;transform:scaleX(1.0380);">0.70</span>
<span class="t" style="left:622.96px;top:527.66px;font-size:24.5px;line-height:24.5px;color:#000;transform:scaleX(1.0353);">O</span>
<span class="t" style="left:894.30px;top:529.67px;font-size:28.5px;line-height:28.5px;color:#000;transform:scaleX(0.8907);"><span style="font-family:'Liberation Mono';font-size:0.97em;margin-left:-0.09em;letter-spacing:-0.09em">I</span>ron Magnesium Oxide</span>
<span class="t" style="left:1327.86px;top:529.67px;font-size:28.5px;line-height:28.5px;color:#000;transform:scaleX(0.9185);">Ferropericlase, syn (NR)</span>
<span class="t" style="left:2031.65px;top:529.67px;font-size:28.5px;line-height:28.5px;color:#000;transform:scaleX(0.9521);">3.74</span>
<span class="t" style="left:2103.36px;top:529.67px;font-size:28.5px;line-height:28.5px;color:#000;transform:scaleX(0.9350);">00-061-0357</span>
<div class="a" style="left:2270px;top:0;width:111px;height:1952px;overflow:hidden;"><span class="t" style="left:33.03px;top:529.67px;font-size:28.5px;line-height:28.5px;color:#4a4aff;transform:scaleX(0.9728);">2.0947</span></div>
<span class="t" style="left:47.88px;top:573.17px;font-size:28.5px;line-height:28.5px;color:#1fc61f;transform:scaleX(0.9212);">2097</span>
<span class="t" style="left:178.35px;top:573.17px;font-size:28.5px;line-height:28.5px;color:#000;transform:scaleX(0.9467);">2 of 4</span>
<span class="t" style="left:262.68px;top:576.98px;font-size:24px;line-height:24px;color:#000;transform:scaleX(1.0205);font-style:italic;">(50%)</span>
<span class="t" style="left:413.97px;top:575.83px;font-size:28px;line-height:28px;color:#000;transform:scaleX(0.7154);font-family:'Liberation Mono';">I</span>
<span class="t" style="left:458.99px;top:571.16px;font-size:24.5px;line-height:24.5px;color:#000;transform:scaleX(1.0107);">Cu</span>
<span class="t" style="left:491.63px;top:586.35px;font-size:20.5px;line-height:20.5px;color:#000;transform:scaleX(1.0676);">1.15</span>
<span class="t" style="left:538.20px;top:571.16px;font-size:24.5px;line-height:24.5px;color:#000;transform:scaleX(1.0497);">Pd</span>
<span class="t" style="left:572.40px;top:586.35px;font-size:20.5px;line-height:20.5px;color:#000;transform:scaleX(1.0684);">0.85</span>
<span class="t" style="left:893.42px;top:573.17px;font-size:28.5px;line-height:28.5px;color:#000;transform:scaleX(0.8825);">Copper Palladium</span>
<span class="t" style="left:1328.77px;top:573.17px;font-size:28.5px;line-height:28.5px;color:#000;transform:scaleX(0.9311);">Skaergaardite, syn</span>
<span class="t" style="left:2032.11px;top:573.17px;font-size:28.5px;line-height:28.5px;color:#000;transform:scaleX(0.9437);">16.4</span>
<span class="t" style="left:2103.36px;top:573.17px;font-size:28.5px;line-height:28.5px;color:#000;transform:scaleX(0.9350);">04-021-8351</span>
<div class="a" style="left:2270px;top:0;width:111px;height:1952px;overflow:hidden;"><span class="t" style="left:17.74px;top:573.17px;font-size:28.5px;line-height:28.5px;color:#4a4aff;transform:scaleX(0.9621);">2.09304</span></div>
<span class="t" style="left:31.95px;top:907.57px;font-size:28.5px;line-height:28.5px;color:#000;transform:scaleX(0.9249);">1D Diffraction Patterns</span>
<span class="t" style="left:323.17px;top:911.57px;font-size:28.5px;line-height:28.5px;color:#000;transform:scaleX(0.9157);">Phases (2)</span>
<span class="t" style="left:473.04px;top:911.57px;font-size:28.5px;line-height:28.5px;color:#000;transform:scaleX(0.9303);">Peaks (18 of 21)</span>
<span class="t" style="left:135.24px;top:1718.13px;font-size:29.5px;line-height:29.5px;color:#000;transform:scaleX(0.9850);-webkit-text-stroke:0;">0</span>
<span class="t" style="left:102.92px;top:1654.83px;font-size:29.5px;line-height:29.5px;color:#000;transform:scaleX(0.9850);-webkit-text-stroke:0;">500</span>
<span class="t" style="left:78.69px;top:1591.23px;font-size:29.5px;line-height:29.5px;color:#000;transform:scaleX(0.9850);-webkit-text-stroke:0;">1,000</span>
<span class="t" style="left:78.69px;top:1528.03px;font-size:29.5px;line-height:29.5px;color:#000;transform:scaleX(0.9850);-webkit-text-stroke:0;">1,500</span>
<span class="t" style="left:78.69px;top:1465.33px;font-size:29.5px;line-height:29.5px;color:#000;transform:scaleX(0.9850);-webkit-text-stroke:0;">2,000</span>
<span class="t" style="left:78.69px;top:1402.33px;font-size:29.5px;line-height:29.5px;color:#000;transform:scaleX(0.9850);-webkit-text-stroke:0;">2,500</span>
<span class="t" style="left:78.69px;top:1338.93px;font-size:29.5px;line-height:29.5px;color:#000;transform:scaleX(0.9850);-webkit-text-stroke:0;">3,000</span>
<span class="t" style="left:78.69px;top:1273.33px;font-size:29.5px;line-height:29.5px;color:#000;transform:scaleX(0.9850);-webkit-text-stroke:0;">3,500</span>
<span class="t" style="left:78.69px;top:1211.33px;font-size:29.5px;line-height:29.5px;color:#000;transform:scaleX(0.9850);-webkit-text-stroke:0;">4,000</span>
<span class="t" style="left:78.69px;top:1148.03px;font-size:29.5px;line-height:29.5px;color:#000;transform:scaleX(0.9850);-webkit-text-stroke:0;">4,500</span>
<span class="t" style="left:78.69px;top:1085.33px;font-size:29.5px;line-height:29.5px;color:#000;transform:scaleX(0.9850);-webkit-text-stroke:0;">5,000</span>
<span class="t" style="left:78.69px;top:1019.13px;font-size:29.5px;line-height:29.5px;color:#000;transform:scaleX(0.9850);-webkit-text-stroke:0;">5,500</span>
<span class="t" style="left:191.63px;top:1854.83px;font-size:29.5px;line-height:29.5px;color:#000;transform:scaleX(0.9850);-webkit-text-stroke:0;">6</span>
<span class="t" style="left:257.18px;top:1854.83px;font-size:29.5px;line-height:29.5px;color:#000;transform:scaleX(0.9850);-webkit-text-stroke:0;">8</span>
<span class="t" style="left:314.15px;top:1854.83px;font-size:29.5px;line-height:29.5px;color:#000;transform:scaleX(0.9850);-webkit-text-stroke:0;">10</span>
<span class="t" style="left:380.19px;top:1854.83px;font-size:29.5px;line-height:29.5px;color:#000;transform:scaleX(0.9850);-webkit-text-stroke:0;">12</span>
<span class="t" style="left:445.25px;top:1854.83px;font-size:29.5px;line-height:29.5px;color:#000;transform:scaleX(0.9850);-webkit-text-stroke:0;">14</span>
<span class="t" style="left:510.79px;top:1854.83px;font-size:29.5px;line-height:29.5px;color:#000;transform:scaleX(0.9850);-webkit-text-stroke:0;">16</span>
<span class="t" style="left:576.34px;top:1854.83px;font-size:29.5px;line-height:29.5px;color:#000;transform:scaleX(0.9850);-webkit-text-stroke:0;">18</span>
<span class="t" style="left:642.38px;top:1854.83px;font-size:29.5px;line-height:29.5px;color:#000;transform:scaleX(0.9850);-webkit-text-stroke:0;">20</span>
<span class="t" style="left:708.42px;top:1854.83px;font-size:29.5px;line-height:29.5px;color:#000;transform:scaleX(0.9850);-webkit-text-stroke:0;">22</span>
<span class="t" style="left:773.48px;top:1854.83px;font-size:29.5px;line-height:29.5px;color:#000;transform:scaleX(0.9850);-webkit-text-stroke:0;">24</span>
<span class="t" style="left:839.03px;top:1854.83px;font-size:29.5px;line-height:29.5px;color:#000;transform:scaleX(0.9850);-webkit-text-stroke:0;">26</span>
<span class="t" style="left:904.58px;top:1854.83px;font-size:29.5px;line-height:29.5px;color:#000;transform:scaleX(0.9850);-webkit-text-stroke:0;">28</span>
<span class="t" style="left:970.12px;top:1854.83px;font-size:29.5px;line-height:29.5px;color:#000;transform:scaleX(0.9850);-webkit-text-stroke:0;">30</span>
<span class="t" style="left:1036.16px;top:1854.83px;font-size:29.5px;line-height:29.5px;color:#000;transform:scaleX(0.9850);-webkit-text-stroke:0;">32</span>
<span class="t" style="left:1101.22px;top:1854.83px;font-size:29.5px;line-height:29.5px;color:#000;transform:scaleX(0.9850);-webkit-text-stroke:0;">34</span>
<span class="t" style="left:1166.77px;top:1854.83px;font-size:29.5px;line-height:29.5px;color:#000;transform:scaleX(0.9850);-webkit-text-stroke:0;">36</span>
<span class="t" style="left:1232.32px;top:1854.83px;font-size:29.5px;line-height:29.5px;color:#000;transform:scaleX(0.9850);-webkit-text-stroke:0;">38</span>
<span class="t" style="left:1298.36px;top:1854.83px;font-size:29.5px;line-height:29.5px;color:#000;transform:scaleX(0.9850);-webkit-text-stroke:0;">40</span>
<span class="t" style="left:1364.40px;top:1854.83px;font-size:29.5px;line-height:29.5px;color:#000;transform:scaleX(0.9850);-webkit-text-stroke:0;">42</span>
<span class="t" style="left:1429.45px;top:1854.83px;font-size:29.5px;line-height:29.5px;color:#000;transform:scaleX(0.9850);-webkit-text-stroke:0;">44</span>
<span class="t" style="left:1495.00px;top:1854.83px;font-size:29.5px;line-height:29.5px;color:#000;transform:scaleX(0.9850);-webkit-text-stroke:0;">46</span>
<span class="t" style="left:1560.55px;top:1854.83px;font-size:29.5px;line-height:29.5px;color:#000;transform:scaleX(0.9850);-webkit-text-stroke:0;">48</span>
<span class="t" style="left:1625.60px;top:1854.83px;font-size:29.5px;line-height:29.5px;color:#000;transform:scaleX(0.9850);-webkit-text-stroke:0;">50</span>
<span class="t" style="left:1691.64px;top:1854.83px;font-size:29.5px;line-height:29.5px;color:#000;transform:scaleX(0.9850);-webkit-text-stroke:0;">52</span>
<span class="t" style="left:1756.70px;top:1854.83px;font-size:29.5px;line-height:29.5px;color:#000;transform:scaleX(0.9850);-webkit-text-stroke:0;">54</span>
<span class="t" style="left:1822.25px;top:1854.83px;font-size:29.5px;line-height:29.5px;color:#000;transform:scaleX(0.9850);-webkit-text-stroke:0;">56</span>
<span class="t" style="left:1887.80px;top:1854.83px;font-size:29.5px;line-height:29.5px;color:#000;transform:scaleX(0.9850);-webkit-text-stroke:0;">58</span>
<span class="t" style="left:1953.34px;top:1854.83px;font-size:29.5px;line-height:29.5px;color:#000;transform:scaleX(0.9850);-webkit-text-stroke:0;">60</span>
<span class="t" style="left:2019.38px;top:1854.83px;font-size:29.5px;line-height:29.5px;color:#000;transform:scaleX(0.9850);-webkit-text-stroke:0;">62</span>
<span class="t" style="left:2084.44px;top:1854.83px;font-size:29.5px;line-height:29.5px;color:#000;transform:scaleX(0.9850);-webkit-text-stroke:0;">64</span>
<span class="t" style="left:2149.99px;top:1854.83px;font-size:29.5px;line-height:29.5px;color:#000;transform:scaleX(0.9850);-webkit-text-stroke:0;">66</span>
<span class="t" style="left:2215.54px;top:1854.83px;font-size:29.5px;line-height:29.5px;color:#000;transform:scaleX(0.9850);-webkit-text-stroke:0;">68</span>
<div class="a" style="left:2260px;top:0;width:36.5px;height:1952px;overflow:hidden;"><span class="t" style="left:21.08px;top:1854.83px;font-size:29.5px;line-height:29.5px;color:#000;transform:scaleX(0.9850);-webkit-text-stroke:0;">70</span></div>
<span class="t" style="left:1198.23px;top:1898.11px;font-size:30px;line-height:30px;color:#000;transform:scaleX(0.9708);-webkit-text-stroke:0;">2θ (°)</span>
<span class="t" style="left:1910.60px;top:989.35px;font-size:29px;line-height:29px;color:#000;transform:scaleX(0.9995);-webkit-text-stroke:0;font-weight:bold;">ChineseWhite.raw</span>
<span class="t" style="left:1910.97px;top:1037.03px;font-size:29.5px;line-height:29.5px;color:#000;transform:scaleX(1.0169);-webkit-text-stroke:0;">1. Calcium Carbonate (29%)</span>
<span class="t" style="left:1912.01px;top:1085.53px;font-size:29.5px;line-height:29.5px;color:#000;transform:scaleX(0.9906);-webkit-text-stroke:0;">2. Anatase, syn (71%)</span>
<span class="t" style="left:1912.01px;top:1133.63px;font-size:29.5px;line-height:29.5px;color:#000;transform:scaleX(0.9948);-webkit-text-stroke:0;font-style:italic;">Calcite, syn?</span>
<span class="t" style="left:32.56px;top:1407.87px;font-size:31px;line-height:31px;color:#000;transform:rotate(-90deg) scaleX(0.9346);-webkit-text-stroke:0;">Intensity</span>
<span class="t" style="left:331.03px;top:1091.60px;font-size:28px;line-height:28px;color:#000;transform:scaleX(0.9698);">Single Peak Search</span>
<span class="t" style="left:278.96px;top:1163.72px;font-size:27.5px;line-height:27.5px;color:#000;transform:scaleX(0.9441);">Search peak:</span>
<span class="t" style="left:518.02px;top:1163.72px;font-size:27.5px;line-height:27.5px;color:#1a4fad;transform:scaleX(0.9805);">7.611183 Å</span>
<span class="t" style="left:278.94px;top:1217.22px;font-size:27.5px;line-height:27.5px;color:#000;transform:scaleX(0.9602);">Search window (Å):</span>
<span class="t" style="left:523.58px;top:1217.22px;font-size:27.5px;line-height:27.5px;color:#000;transform:scaleX(1.0151);">0.01</span>
<span class="t" style="left:315.46px;top:1272.72px;font-size:27.5px;line-height:27.5px;color:#000;transform:scaleX(0.9357);">Strong line</span>
<span class="t" style="left:500.16px;top:1272.72px;font-size:27.5px;line-height:27.5px;color:#000;transform:scaleX(0.9220);">Long line</span>
<span class="t" style="left:335.64px;top:1355.02px;font-size:27.5px;line-height:27.5px;color:#000;transform:scaleX(0.9315);">Run Search</span>
<span class="t" style="left:557.39px;top:1355.02px;font-size:27.5px;line-height:27.5px;color:#000;transform:scaleX(0.9103);">Cancel</span>

<div class="a" style="left:204.8px;top:1023px;width:540.6px;height:436.4px;background:rgba(237,125,49,0.11);border:13px solid #ed7d31;border-radius:76px;box-sizing:border-box;"></div>
</body></html>
